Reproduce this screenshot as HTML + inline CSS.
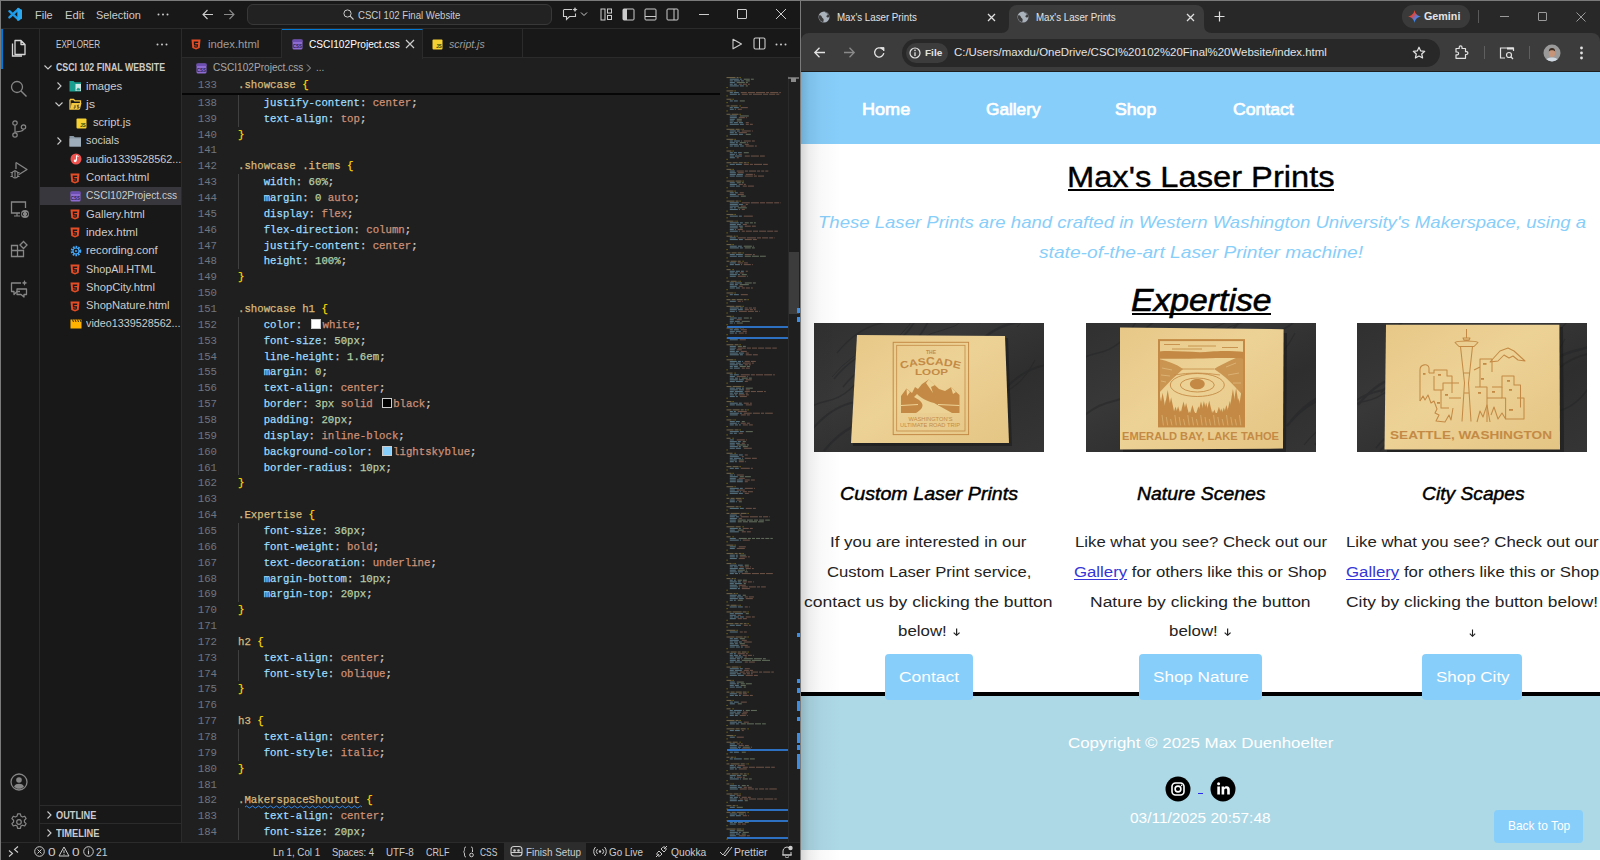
<!DOCTYPE html><html><head><meta charset="utf-8"><style>
*{margin:0;padding:0;box-sizing:border-box}
html,body{width:1600px;height:860px;overflow:hidden;background:#6a6a6a;font-family:"Liberation Sans",sans-serif;position:relative}
.a{position:absolute}
.cl{position:absolute;left:238px;font-family:"Liberation Mono",monospace;font-size:10.7px;line-height:16px;height:16px;white-space:pre;color:#cccccc;-webkit-text-stroke:0.25px currentColor}
.ln{position:absolute;left:182px;width:35px;text-align:right;color:#6e7681;font-family:"Liberation Mono",monospace;font-size:10.7px;line-height:16px;height:16px}
.p{color:#9cdcfe}.v{color:#ce9178}.n{color:#b5cea8}.s{color:#d7ba7d}.b{color:#ffd700}
.sw{display:inline-block;width:10px;height:10px;border:1px solid #ccc;vertical-align:-1px;margin-left:2.5px;margin-right:1.5px}
</style></head><body><div class="a" style="left:1px;top:1px;width:799px;height:859px;background:#1f1f1f"></div><div class="a" style="left:1px;top:1px;width:799px;height:28px;background:#181818;border-bottom:1px solid #2b2b2b"></div><div class="a" style="left:1px;top:29px;width:39px;height:813px;background:#181818;border-right:1px solid #2b2b2b"></div><div class="a" style="left:40px;top:29px;width:142px;height:813px;background:#181818;border-right:1px solid #2b2b2b"></div><div class="a" style="left:182px;top:29px;width:618px;height:29px;background:#181818;border-bottom:1px solid #2b2b2b"></div><div class="a" style="left:1px;top:842px;width:799px;height:18px;background:#181818;border-top:1px solid #2b2b2b"></div><div class="a" style="left:0;top:0;width:1600px;height:1px;background:#7a7a7a"></div><div class="a" style="left:0;top:0;width:1px;height:860px;background:#7a7a7a"></div><div class="a" style="left:800px;top:0;width:1px;height:860px;background:#7a7a7a"></div><div class="ln" style="top:77.0px">133</div><div class="cl" style="top:77.0px"><span class="s">.showcase</span> <span class="b">{</span></div><div class="ln" style="top:94.8px">138</div><div class="cl" style="top:94.8px">    <span class="p">justify-content</span>: <span class="v">center</span>;</div><div class="ln" style="top:110.7px">139</div><div class="cl" style="top:110.7px">    <span class="p">text-align</span>: <span class="v">top</span>;</div><div class="ln" style="top:126.5px">140</div><div class="cl" style="top:126.5px"><span class="b">}</span></div><div class="ln" style="top:142.4px">141</div><div class="cl" style="top:142.4px"></div><div class="ln" style="top:158.2px">142</div><div class="cl" style="top:158.2px"><span class="s">.showcase</span> <span class="s">.items</span> <span class="b">{</span></div><div class="ln" style="top:174.1px">143</div><div class="cl" style="top:174.1px">    <span class="p">width</span>: <span class="n">60%</span>;</div><div class="ln" style="top:189.9px">144</div><div class="cl" style="top:189.9px">    <span class="p">margin</span>: <span class="n">0</span> <span class="v">auto</span>;</div><div class="ln" style="top:205.8px">145</div><div class="cl" style="top:205.8px">    <span class="p">display</span>: <span class="v">flex</span>;</div><div class="ln" style="top:221.6px">146</div><div class="cl" style="top:221.6px">    <span class="p">flex-direction</span>: <span class="v">column</span>;</div><div class="ln" style="top:237.5px">147</div><div class="cl" style="top:237.5px">    <span class="p">justify-content</span>: <span class="v">center</span>;</div><div class="ln" style="top:253.4px">148</div><div class="cl" style="top:253.4px">    <span class="p">height</span>: <span class="n">100%</span>;</div><div class="ln" style="top:269.2px">149</div><div class="cl" style="top:269.2px"><span class="b">}</span></div><div class="ln" style="top:285.1px">150</div><div class="cl" style="top:285.1px"></div><div class="ln" style="top:300.9px">151</div><div class="cl" style="top:300.9px"><span class="s">.showcase</span> <span class="s">h1</span> <span class="b">{</span></div><div class="ln" style="top:316.8px">152</div><div class="cl" style="top:316.8px">    <span class="p">color</span>: <span class="sw" style="background:#fff"></span><span class="v">white</span>;</div><div class="ln" style="top:332.6px">153</div><div class="cl" style="top:332.6px">    <span class="p">font-size</span>: <span class="n">50px</span>;</div><div class="ln" style="top:348.5px">154</div><div class="cl" style="top:348.5px">    <span class="p">line-height</span>: <span class="n">1.6em</span>;</div><div class="ln" style="top:364.3px">155</div><div class="cl" style="top:364.3px">    <span class="p">margin</span>: <span class="n">0</span>;</div><div class="ln" style="top:380.2px">156</div><div class="cl" style="top:380.2px">    <span class="p">text-align</span>: <span class="v">center</span>;</div><div class="ln" style="top:396.0px">157</div><div class="cl" style="top:396.0px">    <span class="p">border</span>: <span class="n">3px</span> <span class="v">solid</span> <span class="sw" style="background:#000"></span><span class="v">black</span>;</div><div class="ln" style="top:411.9px">158</div><div class="cl" style="top:411.9px">    <span class="p">padding</span>: <span class="n">20px</span>;</div><div class="ln" style="top:427.8px">159</div><div class="cl" style="top:427.8px">    <span class="p">display</span>: <span class="v">inline-block</span>;</div><div class="ln" style="top:443.6px">160</div><div class="cl" style="top:443.6px">    <span class="p">background-color</span>: <span class="sw" style="background:#87cefa"></span><span class="v">lightskyblue</span>;</div><div class="ln" style="top:459.5px">161</div><div class="cl" style="top:459.5px">    <span class="p">border-radius</span>: <span class="n">10px</span>;</div><div class="ln" style="top:475.3px">162</div><div class="cl" style="top:475.3px"><span class="b">}</span></div><div class="ln" style="top:491.2px">163</div><div class="cl" style="top:491.2px"></div><div class="ln" style="top:507.0px">164</div><div class="cl" style="top:507.0px"><span class="s">.Expertise</span> <span class="b">{</span></div><div class="ln" style="top:522.9px">165</div><div class="cl" style="top:522.9px">    <span class="p">font-size</span>: <span class="n">36px</span>;</div><div class="ln" style="top:538.7px">166</div><div class="cl" style="top:538.7px">    <span class="p">font-weight</span>: <span class="v">bold</span>;</div><div class="ln" style="top:554.6px">167</div><div class="cl" style="top:554.6px">    <span class="p">text-decoration</span>: <span class="v">underline</span>;</div><div class="ln" style="top:570.5px">168</div><div class="cl" style="top:570.5px">    <span class="p">margin-bottom</span>: <span class="n">10px</span>;</div><div class="ln" style="top:586.3px">169</div><div class="cl" style="top:586.3px">    <span class="p">margin-top</span>: <span class="n">20px</span>;</div><div class="ln" style="top:602.2px">170</div><div class="cl" style="top:602.2px"><span class="b">}</span></div><div class="ln" style="top:618.0px">171</div><div class="cl" style="top:618.0px"></div><div class="ln" style="top:633.9px">172</div><div class="cl" style="top:633.9px"><span class="s">h2</span> <span class="b">{</span></div><div class="ln" style="top:649.7px">173</div><div class="cl" style="top:649.7px">    <span class="p">text-align</span>: <span class="v">center</span>;</div><div class="ln" style="top:665.6px">174</div><div class="cl" style="top:665.6px">    <span class="p">font-style</span>: <span class="v">oblique</span>;</div><div class="ln" style="top:681.4px">175</div><div class="cl" style="top:681.4px"><span class="b">}</span></div><div class="ln" style="top:697.3px">176</div><div class="cl" style="top:697.3px"></div><div class="ln" style="top:713.1px">177</div><div class="cl" style="top:713.1px"><span class="s">h3</span> <span class="b">{</span></div><div class="ln" style="top:729.0px">178</div><div class="cl" style="top:729.0px">    <span class="p">text-align</span>: <span class="v">center</span>;</div><div class="ln" style="top:744.9px">179</div><div class="cl" style="top:744.9px">    <span class="p">font-style</span>: <span class="v">italic</span>;</div><div class="ln" style="top:760.7px">180</div><div class="cl" style="top:760.7px"><span class="b">}</span></div><div class="ln" style="top:776.6px">181</div><div class="cl" style="top:776.6px"></div><div class="ln" style="top:792.4px">182</div><div class="cl" style="top:792.4px"><span class="s">.MakerspaceShoutout</span> <span class="b">{</span></div><div class="ln" style="top:808.3px">183</div><div class="cl" style="top:808.3px">    <span class="p">text-align</span>: <span class="v">center</span>;</div><div class="ln" style="top:824.1px">184</div><div class="cl" style="top:824.1px">    <span class="p">font-size</span>: <span class="n">20px</span>;</div><svg class="a" style="left:244.5px;top:804.5px" width="117" height="4" viewBox="0 0 117 4"><path d="M0 2 q1.5 -2 3 0 q1.5 2 3 0 q1.5 -2 3 0 q1.5 2 3 0 q1.5 -2 3 0 q1.5 2 3 0 q1.5 -2 3 0 q1.5 2 3 0 q1.5 -2 3 0 q1.5 2 3 0 q1.5 -2 3 0 q1.5 2 3 0 q1.5 -2 3 0 q1.5 2 3 0 q1.5 -2 3 0 q1.5 2 3 0 q1.5 -2 3 0 q1.5 2 3 0 q1.5 -2 3 0 q1.5 2 3 0 q1.5 -2 3 0 q1.5 2 3 0 q1.5 -2 3 0 q1.5 2 3 0 q1.5 -2 3 0 q1.5 2 3 0 q1.5 -2 3 0 q1.5 2 3 0 q1.5 -2 3 0 q1.5 2 3 0 q1.5 -2 3 0 q1.5 2 3 0 q1.5 -2 3 0 q1.5 2 3 0 q1.5 -2 3 0 q1.5 2 3 0 q1.5 -2 3 0 q1.5 2 3 0 q1.5 -2 3 0 q1.5 2 3 0" stroke="#3794ff" stroke-width="0.9" fill="none"/></svg><div class="a" style="left:182px;top:93px;width:538px;height:2px;background:#000;opacity:.8"></div><svg class="a" style="left:0;top:0" width="30" height="28" viewBox="0 0 30 28"><path d="M9.4 11.2L18.6 19.6M9.4 17.4L18.6 9" stroke="#1e9be8" stroke-width="2.4" stroke-linecap="round"/><path d="M17.3 7.8L22 9.8V18.8L17.3 21Z" fill="#2aa8f0"/></svg><div class="a fx" id="f8d3d4570" style="left:35.19px;top:8.65px;white-space:nowrap;transform-origin:0 0;transform:scaleX(1.0169);font-size:10.8px;line-height:12.42px;color:#cccccc">File</div><div class="a fx" id="f96f7f891" style="left:65.07px;top:8.65px;white-space:nowrap;transform-origin:0 0;transform:scaleX(1.0371);font-size:10.8px;line-height:12.42px;color:#cccccc">Edit</div><div class="a fx" id="f7fc2f27d" style="left:95.99px;top:8.65px;white-space:nowrap;transform-origin:0 0;transform:scaleX(1.0108);font-size:10.8px;line-height:12.42px;color:#cccccc">Selection</div><svg class="a" style="left:157px;top:13px" width="12" height="3" viewBox="0 0 12 3"><circle cx="1.5" cy="1.5" r="1" fill="#cccccc"/><circle cx="6" cy="1.5" r="1" fill="#cccccc"/><circle cx="10.5" cy="1.5" r="1" fill="#cccccc"/></svg><svg class="a" style="left:201px;top:8px" width="13" height="13" viewBox="0 0 13 13"><path d="M12 6.5H2M6.5 2L2 6.5L6.5 11" stroke="#cccccc" stroke-width="1.1" fill="none"/></svg><svg class="a" style="left:223px;top:8px" width="13" height="13" viewBox="0 0 13 13"><path d="M1 6.5H11M6.5 2L11 6.5L6.5 11" stroke="#8a8a8a" stroke-width="1.1" fill="none"/></svg><div class="a" style="left:247px;top:4px;width:305px;height:21px;background:#222222;border:1px solid #383838;border-radius:6px"></div><svg class="a" style="left:343px;top:9px" width="11" height="11" viewBox="0 0 11 11"><circle cx="4.5" cy="4.5" r="3.6" stroke="#cccccc" stroke-width="1" fill="none"/><path d="M7.2 7.2L10.5 10.5" stroke="#cccccc" stroke-width="1.1"/></svg><div class="a fx" id="fbb0cd3ff" style="left:358.04px;top:8.65px;white-space:nowrap;transform-origin:0 0;transform:scaleX(0.8898);font-size:10.8px;line-height:12.42px;color:#cccccc">CSCI 102 Final Website</div><svg class="a" style="left:561px;top:6px" width="28" height="16" viewBox="0 0 28 16">
<path d="M3 3.5h8M2.5 3.5v7h3v3l3-3h6v-3" stroke="#cccccc" stroke-width="1.1" fill="none"/><path d="M14 1l.8 1.8 1.8.8-1.8.8-.8 1.8-.8-1.8-1.8-.8 1.8-.8z" fill="#cccccc"/>
<path d="M20 6.5l3 3 3-3" stroke="#cccccc" stroke-width="1" fill="none"/></svg><svg class="a" style="left:600px;top:8px" width="13" height="13" viewBox="0 0 13 13"><rect x="1" y="1" width="4" height="11" stroke="#cccccc" fill="none"/><rect x="7.5" y="1" width="4" height="4" stroke="#cccccc" fill="none"/><rect x="7.5" y="7.5" width="4" height="4" stroke="#cccccc" fill="none"/></svg><svg class="a" style="left:622px;top:8px" width="13" height="13" viewBox="0 0 13 13"><rect x="1" y="1" width="11" height="11" rx="1" stroke="#cccccc" fill="none"/><rect x="1" y="1" width="4" height="11" fill="#cccccc"/></svg><svg class="a" style="left:644px;top:8px" width="13" height="13" viewBox="0 0 13 13"><rect x="1" y="1" width="11" height="11" rx="1" stroke="#cccccc" fill="none"/><path d="M1 8.5h11" stroke="#cccccc"/></svg><svg class="a" style="left:666px;top:8px" width="13" height="13" viewBox="0 0 13 13"><rect x="1" y="1" width="11" height="11" rx="1" stroke="#cccccc" fill="none"/><path d="M8 1v11" stroke="#cccccc"/></svg><div class="a" style="left:699px;top:14px;width:10px;height:1px;background:#cccccc"></div><div class="a" style="left:737px;top:9px;width:10px;height:10px;border:1px solid #cccccc;border-radius:1px"></div><svg class="a" style="left:775px;top:8px" width="12" height="12" viewBox="0 0 12 12"><path d="M1 1L11 11M11 1L1 11" stroke="#cccccc" stroke-width="1"/></svg><div class="a" style="left:1px;top:29px;width:2px;height:40px;background:#0078d4"></div><svg class="a" style="left:9px;top:38px" width="20" height="20" viewBox="0 0 20 20"><path d="M6 2.5h6l4 4v10h-10z M12 2.5v4h4" stroke="#d7d7d7" stroke-width="1.3" fill="none" stroke-linejoin="round"/><path d="M3.5 5.5v12.5h9.5" stroke="#d7d7d7" stroke-width="1.3" fill="none"/></svg><svg class="a" style="left:9px;top:79px" width="20" height="20" viewBox="0 0 20 20"><circle cx="8" cy="8" r="5.5" stroke="#868686" stroke-width="1.3" fill="none"/><path d="M12 12L17.5 17.5" stroke="#868686" stroke-width="1.4"/></svg><svg class="a" style="left:9px;top:119px" width="20" height="20" viewBox="0 0 20 20"><circle cx="6" cy="4" r="2.2" stroke="#868686" stroke-width="1.2" fill="none"/><circle cx="6" cy="16" r="2.2" stroke="#868686" stroke-width="1.2" fill="none"/><circle cx="14.5" cy="8" r="2.2" stroke="#868686" stroke-width="1.2" fill="none"/><path d="M6 6.2v7.6M14.5 10.2c0 3-8.5 2-8.5 3.6" stroke="#868686" stroke-width="1.2" fill="none"/></svg><svg class="a" style="left:9px;top:160px" width="20" height="20" viewBox="0 0 20 20"><path d="M7 2.5L18 9.5L10 14.5" stroke="#868686" stroke-width="1.3" fill="none" stroke-linejoin="round"/><path d="M7 2.5V9" stroke="#868686" stroke-width="1.3"/><ellipse cx="6" cy="14.5" rx="3" ry="3.5" stroke="#868686" stroke-width="1.2" fill="none"/><path d="M1.5 12.5h2M8.5 12.5h2M1.5 16.5h2M8.5 16.5h2M6 10v8" stroke="#868686" stroke-width="1.1"/></svg><svg class="a" style="left:9px;top:199px" width="21" height="20" viewBox="0 0 21 20"><path d="M11 14H2.5V3h14v6" stroke="#868686" stroke-width="1.3" fill="none"/><path d="M5 17h6M8 14v3" stroke="#868686" stroke-width="1.2"/><circle cx="16" cy="15" r="4" fill="#868686"/><path d="M14.5 13l-1.5 2 1.5 2M17.5 13l1.5 2-1.5 2" stroke="#181818" stroke-width="1" fill="none"/></svg><svg class="a" style="left:9px;top:239px" width="20" height="20" viewBox="0 0 20 20"><path d="M2.5 6.5h6v11h-6zM8.5 11.5h6v6h-6zM2.5 11.5h6" stroke="#868686" stroke-width="1.3" fill="none"/><path d="M11 6l3.5-3.5L18 6l-3.5 3.5z" stroke="#868686" stroke-width="1.3" fill="none"/></svg><svg class="a" style="left:9px;top:279px" width="20" height="20" viewBox="0 0 20 20"><path d="M12 4H2.5v8.5h2.5v3l3-3h3" stroke="#868686" stroke-width="1.3" fill="none" stroke-linejoin="round"/><path d="M8 10h9.5v5.5H15v2.5l-3-2.5H8z" stroke="#868686" stroke-width="1.3" fill="none" stroke-linejoin="round"/><path d="M15.5 1l.9 2 2 .9-2 .9-.9 2-.9-2-2-.9 2-.9z" fill="#868686"/></svg><svg class="a" style="left:9px;top:772px" width="20" height="20" viewBox="0 0 20 20"><circle cx="10" cy="10" r="8" stroke="#868686" stroke-width="1.3" fill="none"/><circle cx="10" cy="8" r="2.8" fill="#868686"/><path d="M5 14.5c1-2 3-2.7 5-2.7s4 .7 5 2.7c-1.3 1.6-3 2.3-5 2.3s-3.7-.7-5-2.3z" fill="#868686"/></svg><svg class="a" style="left:9px;top:812px" width="20" height="20" viewBox="0 0 20 20"><path d="M8.6 1.8h2.8l.5 2.3 1.6.9 2.2-.8 1.4 2.4-1.7 1.6v1.8l1.7 1.6-1.4 2.4-2.2-.8-1.6.9-.5 2.3H8.6l-.5-2.3-1.6-.9-2.2.8-1.4-2.4 1.7-1.6V8.2L2.9 6.6l1.4-2.4 2.2.8 1.6-.9z" stroke="#868686" stroke-width="1.2" fill="none" stroke-linejoin="round"/><circle cx="10" cy="10" r="2.3" stroke="#868686" stroke-width="1.2" fill="none"/></svg><div class="a fx" id="ffa939419" style="left:55.85px;top:38.78px;white-space:nowrap;transform-origin:0 0;transform:scaleX(0.8096);font-size:10px;line-height:11.50px;color:#cccccc">EXPLORER</div><svg class="a" style="left:156px;top:43px" width="12" height="3" viewBox="0 0 12 3"><circle cx="1.5" cy="1.5" r="1" fill="#cccccc"/><circle cx="6" cy="1.5" r="1" fill="#cccccc"/><circle cx="10.5" cy="1.5" r="1" fill="#cccccc"/></svg><svg class="a" style="left:43px;top:62px" width="10" height="10" viewBox="0 0 10 10"><path d="M1.5 3.5L5 7L8.5 3.5" stroke="#cccccc" stroke-width="1.1" fill="none"/></svg><div class="a fx" id="f34230560" style="left:55.79px;top:62.28px;white-space:nowrap;transform-origin:0 0;transform:scaleX(0.8817);font-size:10px;line-height:11.50px;font-weight:bold;color:#cccccc">CSCI 102 FINAL WEBSITE</div><div class="a" style="left:40px;top:187px;width:141px;height:18px;background:#37373d"></div><svg class="a" style="left:54px;top:81px" width="10" height="10" viewBox="0 0 10 10"><path d="M3.5 1.5L7 5L3.5 8.5" stroke="#cccccc" stroke-width="1.1" fill="none"/></svg><svg class="a" style="left:69px;top:80px" width="13" height="12" viewBox="0 0 13 12"><path d="M0.5 1h4l1.3 1.3H12v9.2H0.5z" fill="#1a9e8f"/><rect x="6.5" y="4" width="5.5" height="7" fill="#cfe9e6"/><path d="M7.5 9.5l1.5-2 1.2 1.2 1-.8V10.5h-3.7z" fill="#1a9e8f"/></svg><div class="a fx" id="f1b36d92f" style="left:85.64px;top:79.53px;white-space:nowrap;transform-origin:0 0;transform:scaleX(0.9518);font-size:11.8px;line-height:13.57px;color:#cccccc">images</div><svg class="a" style="left:54px;top:99px" width="10" height="10" viewBox="0 0 10 10"><path d="M1.5 3.5L5 7L8.5 3.5" stroke="#cccccc" stroke-width="1.1" fill="none"/></svg><svg class="a" style="left:69px;top:98px" width="13" height="12" viewBox="0 0 13 12"><path d="M1 1.5h3.5l1.3 1.3H11.5V5" stroke="#f5c842" stroke-width="1.3" fill="none"/><path d="M1 1.5V11H10.5" stroke="#f5c842" stroke-width="1.3" fill="none"/><path d="M2.5 5H12.5L11 11H1.5z" fill="#f5c842"/><path d="M6 7.2v2.3c0 .8-.9.8-1.3.5M10 7.5c-.5-.5-1.8-.4-1.8.4 0 .9 1.8.6 1.8 1.5 0 .8-1.3.9-1.9.4" stroke="#181818" stroke-width=".8" fill="none"/></svg><div class="a fx" id="f57c8d89e" style="left:85.54px;top:97.83px;white-space:nowrap;transform-origin:0 0;transform:scaleX(1.0784);font-size:11.8px;line-height:13.57px;color:#cccccc">js</div><svg class="a" style="left:76px;top:118px" width="11" height="11" viewBox="0 0 11 11"><rect x="0.5" y="0.5" width="10" height="10" rx="1" fill="#f5d132"/><text x="7" y="9.3" font-size="4.5" font-family="Liberation Sans" fill="#3a3000" text-anchor="middle" font-weight="bold">JS</text></svg><div class="a fx" id="fb6e712b3" style="left:92.65px;top:116.13px;white-space:nowrap;transform-origin:0 0;transform:scaleX(0.9429);font-size:11.8px;line-height:13.57px;color:#cccccc">script.js</div><svg class="a" style="left:54px;top:136px" width="10" height="10" viewBox="0 0 10 10"><path d="M3.5 1.5L7 5L3.5 8.5" stroke="#cccccc" stroke-width="1.1" fill="none"/></svg><svg class="a" style="left:69px;top:135px" width="13" height="12" viewBox="0 0 13 12"><path d="M0.5 1h4l1.3 1.3H12v9.2H0.5z" fill="#8a98a6"/><path d="M0.5 3.5h11.5v8H0.5z" fill="#9fadbb"/></svg><div class="a fx" id="f07948470" style="left:85.66px;top:134.43px;white-space:nowrap;transform-origin:0 0;transform:scaleX(0.9206);font-size:11.8px;line-height:13.57px;color:#cccccc">socials</div><svg class="a" style="left:70px;top:153px" width="12" height="12" viewBox="0 0 12 12"><circle cx="6" cy="6" r="5.5" fill="#ef5350"/><path d="M6.5 2.5v5" stroke="#fff" stroke-width="1.1"/><circle cx="5.2" cy="7.8" r="1.4" fill="#fff"/><path d="M6.5 2.5l2 1" stroke="#fff" stroke-width="1"/></svg><div class="a fx" id="f7b0eb45c" style="left:85.67px;top:152.73px;white-space:nowrap;transform-origin:0 0;transform:scaleX(0.9126);font-size:11.8px;line-height:13.57px;color:#cccccc">audio1339528562...</div><svg class="a" style="left:70px;top:173px" width="10" height="11" viewBox="0 0 10 11"><path d="M0.5 0.5h9l-0.8 8.5L5 10.5 1.3 9z" fill="#e44d26"/><path d="M2.7 2.5h4.6l-.15 1.5H4.2l.1 1.3h2.75l-.3 3L5 8.8l-1.7-.5-.1-1.3h1.2l.05.6.55.15.6-.15.1-1.2H3z" fill="#181818"/></svg><div class="a fx" id="fe304c48c" style="left:85.64px;top:171.03px;white-space:nowrap;transform-origin:0 0;transform:scaleX(0.9542);font-size:11.8px;line-height:13.57px;color:#cccccc">Contact.html</div><svg class="a" style="left:70px;top:191px" width="11" height="11" viewBox="0 0 11 11"><rect x="0.5" y="0.5" width="10" height="10" rx="1.5" fill="#8d6bd1"/><rect x="0.5" y="0.5" width="10" height="2.5" fill="#6c4fb0"/><text x="5.5" y="8.8" font-size="4.5" font-family="Liberation Sans" fill="#2d1f52" text-anchor="middle" font-weight="bold">CSS</text></svg><div class="a fx" id="fc0e2760e" style="left:85.71px;top:189.33px;white-space:nowrap;transform-origin:0 0;transform:scaleX(0.8639);font-size:11.8px;line-height:13.57px;color:#cccccc">CSCI102Project.css</div><svg class="a" style="left:70px;top:209px" width="10" height="11" viewBox="0 0 10 11"><path d="M0.5 0.5h9l-0.8 8.5L5 10.5 1.3 9z" fill="#e44d26"/><path d="M2.7 2.5h4.6l-.15 1.5H4.2l.1 1.3h2.75l-.3 3L5 8.8l-1.7-.5-.1-1.3h1.2l.05.6.55.15.6-.15.1-1.2H3z" fill="#181818"/></svg><div class="a fx" id="f9db9fd0f" style="left:85.64px;top:207.63px;white-space:nowrap;transform-origin:0 0;transform:scaleX(0.9474);font-size:11.8px;line-height:13.57px;color:#cccccc">Gallery.html</div><svg class="a" style="left:70px;top:227px" width="10" height="11" viewBox="0 0 10 11"><path d="M0.5 0.5h9l-0.8 8.5L5 10.5 1.3 9z" fill="#e44d26"/><path d="M2.7 2.5h4.6l-.15 1.5H4.2l.1 1.3h2.75l-.3 3L5 8.8l-1.7-.5-.1-1.3h1.2l.05.6.55.15.6-.15.1-1.2H3z" fill="#181818"/></svg><div class="a fx" id="fc4af1360" style="left:85.63px;top:225.93px;white-space:nowrap;transform-origin:0 0;transform:scaleX(0.9632);font-size:11.8px;line-height:13.57px;color:#cccccc">index.html</div><svg class="a" style="left:70px;top:245px" width="12" height="12" viewBox="0 0 12 12"><circle cx="6" cy="6" r="4.2" stroke="#42a5f5" stroke-width="2.2" stroke-dasharray="1.6 1.1" fill="none"/><circle cx="6" cy="6" r="3" stroke="#42a5f5" stroke-width="1.1" fill="none"/><circle cx="6" cy="6" r="1" fill="#42a5f5"/></svg><div class="a fx" id="f62ac2ffd" style="left:85.63px;top:244.23px;white-space:nowrap;transform-origin:0 0;transform:scaleX(0.9577);font-size:11.8px;line-height:13.57px;color:#cccccc">recording.conf</div><svg class="a" style="left:70px;top:264px" width="10" height="11" viewBox="0 0 10 11"><path d="M0.5 0.5h9l-0.8 8.5L5 10.5 1.3 9z" fill="#e44d26"/><path d="M2.7 2.5h4.6l-.15 1.5H4.2l.1 1.3h2.75l-.3 3L5 8.8l-1.7-.5-.1-1.3h1.2l.05.6.55.15.6-.15.1-1.2H3z" fill="#181818"/></svg><div class="a fx" id="fa7ce2646" style="left:85.67px;top:262.53px;white-space:nowrap;transform-origin:0 0;transform:scaleX(0.9164);font-size:11.8px;line-height:13.57px;color:#cccccc">ShopAll.HTML</div><svg class="a" style="left:70px;top:282px" width="10" height="11" viewBox="0 0 10 11"><path d="M0.5 0.5h9l-0.8 8.5L5 10.5 1.3 9z" fill="#e44d26"/><path d="M2.7 2.5h4.6l-.15 1.5H4.2l.1 1.3h2.75l-.3 3L5 8.8l-1.7-.5-.1-1.3h1.2l.05.6.55.15.6-.15.1-1.2H3z" fill="#181818"/></svg><div class="a fx" id="fd6530ebb" style="left:85.64px;top:280.83px;white-space:nowrap;transform-origin:0 0;transform:scaleX(0.9495);font-size:11.8px;line-height:13.57px;color:#cccccc">ShopCity.html</div><svg class="a" style="left:70px;top:301px" width="10" height="11" viewBox="0 0 10 11"><path d="M0.5 0.5h9l-0.8 8.5L5 10.5 1.3 9z" fill="#e44d26"/><path d="M2.7 2.5h4.6l-.15 1.5H4.2l.1 1.3h2.75l-.3 3L5 8.8l-1.7-.5-.1-1.3h1.2l.05.6.55.15.6-.15.1-1.2H3z" fill="#181818"/></svg><div class="a fx" id="f7647395e" style="left:85.64px;top:299.13px;white-space:nowrap;transform-origin:0 0;transform:scaleX(0.9443);font-size:11.8px;line-height:13.57px;color:#cccccc">ShopNature.html</div><svg class="a" style="left:70px;top:319px" width="12" height="10" viewBox="0 0 12 10"><rect x="0.5" y="3" width="11" height="6.5" fill="#ffb300"/><path d="M0.5 0.5h11v2.5h-11z" fill="#ffb300"/><path d="M2.5 0.5l1 2.5M5 0.5l1 2.5M7.5 0.5l1 2.5M10 0.5l1 2.5" stroke="#181818" stroke-width="0.9"/></svg><div class="a fx" id="fc50c4e35" style="left:85.67px;top:317.43px;white-space:nowrap;transform-origin:0 0;transform:scaleX(0.9126);font-size:11.8px;line-height:13.57px;color:#cccccc">video1339528562...</div><div class="a" style="left:40px;top:805px;width:141px;height:1px;background:#2b2b2b"></div><div class="a" style="left:40px;top:823px;width:141px;height:1px;background:#2b2b2b"></div><svg class="a" style="left:44px;top:810px" width="10" height="10" viewBox="0 0 10 10"><path d="M3.5 1.5L7 5L3.5 8.5" stroke="#cccccc" stroke-width="1.1" fill="none"/></svg><svg class="a" style="left:44px;top:828px" width="10" height="10" viewBox="0 0 10 10"><path d="M3.5 1.5L7 5L3.5 8.5" stroke="#cccccc" stroke-width="1.1" fill="none"/></svg><div class="a fx" id="fd5aaadbe" style="left:55.76px;top:810.18px;white-space:nowrap;transform-origin:0 0;transform:scaleX(0.9193);font-size:10px;line-height:11.50px;font-weight:bold;color:#cccccc">OUTLINE</div><div class="a fx" id="f925b05a7" style="left:55.75px;top:828.38px;white-space:nowrap;transform-origin:0 0;transform:scaleX(0.9320);font-size:10px;line-height:11.50px;font-weight:bold;color:#cccccc">TIMELINE</div><div class="a" style="left:182px;top:29px;width:100px;height:29px;border-right:1px solid #2b2b2b"></div><div class="a" style="left:282px;top:29px;width:141px;height:30px;background:#1f1f1f;border-top:1px solid #0078d4;border-right:1px solid #2b2b2b"></div><div class="a" style="left:422px;top:29px;width:101px;height:29px;border-right:1px solid #2b2b2b"></div><svg class="a" style="left:191px;top:39px" width="10" height="11" viewBox="0 0 10 11"><path d="M0.5 0.5h9l-0.8 8.5L5 10.5 1.3 9z" fill="#e44d26"/><path d="M2.7 2.5h4.6l-.15 1.5H4.2l.1 1.3h2.75l-.3 3L5 8.8l-1.7-.5-.1-1.3h1.2l.05.6.55.15.6-.15.1-1.2H3z" fill="#181818"/></svg><div class="a fx" id="f9b634681" style="left:207.60px;top:38.43px;white-space:nowrap;transform-origin:0 0;transform:scaleX(1.0059);font-size:11.2px;line-height:12.88px;color:#9d9d9d">index.html</div><svg class="a" style="left:292px;top:39px" width="11" height="11" viewBox="0 0 11 11"><rect x="0.5" y="0.5" width="10" height="10" rx="1.5" fill="#8d6bd1"/><rect x="0.5" y="0.5" width="10" height="2.5" fill="#6c4fb0"/><text x="5.5" y="8.8" font-size="4.5" font-family="Liberation Sans" fill="#2d1f52" text-anchor="middle" font-weight="bold">CSS</text></svg><div class="a fx" id="f3b2363e3" style="left:308.58px;top:38.43px;white-space:nowrap;transform-origin:0 0;transform:scaleX(0.9060);font-size:11.2px;line-height:12.88px;color:#ffffff">CSCI102Project.css</div><svg class="a" style="left:405px;top:39px" width="10" height="10" viewBox="0 0 10 10"><path d="M1 1L9 9M9 1L1 9" stroke="#cccccc" stroke-width="1.2"/></svg><svg class="a" style="left:432px;top:39px" width="11" height="11" viewBox="0 0 11 11"><rect x="0.5" y="0.5" width="10" height="10" rx="1" fill="#f5d132"/><text x="7" y="9.3" font-size="4.5" font-family="Liberation Sans" fill="#3a3000" text-anchor="middle" font-weight="bold">JS</text></svg><div class="a fx" id="f0c9adb2a" style="left:448.65px;top:38.43px;white-space:nowrap;transform-origin:0 0;transform:scaleX(0.9414);font-size:11.2px;line-height:12.88px;color:#9d9d9d;font-style:italic">script.js</div><svg class="a" style="left:731px;top:38px" width="12" height="12" viewBox="0 0 12 12"><path d="M2 1.2L10.5 6L2 10.8z" stroke="#cccccc" stroke-width="1.1" fill="none" stroke-linejoin="round"/></svg><svg class="a" style="left:753px;top:37px" width="13" height="13" viewBox="0 0 13 13"><rect x="1" y="1" width="11" height="11" rx="1.5" stroke="#cccccc" stroke-width="1.1" fill="none"/><path d="M6.5 1v11" stroke="#cccccc" stroke-width="1.1"/></svg><svg class="a" style="left:775px;top:43px" width="12" height="3" viewBox="0 0 12 3"><circle cx="1.5" cy="1.5" r="1" fill="#cccccc"/><circle cx="6" cy="1.5" r="1" fill="#cccccc"/><circle cx="10.5" cy="1.5" r="1" fill="#cccccc"/></svg><svg class="a" style="left:196px;top:63px" width="11" height="11" viewBox="0 0 11 11"><rect x="0.5" y="0.5" width="10" height="10" rx="1.5" fill="#8d6bd1"/><rect x="0.5" y="0.5" width="10" height="2.5" fill="#6c4fb0"/><text x="5.5" y="8.8" font-size="4.5" font-family="Liberation Sans" fill="#2d1f52" text-anchor="middle" font-weight="bold">CSS</text></svg><div class="a fx" id="fc90b84e4" style="left:212.72px;top:62.02px;white-space:nowrap;transform-origin:0 0;transform:scaleX(0.9711);font-size:10.4px;line-height:11.96px;color:#a9a9a9">CSCI102Project.css</div><svg class="a" style="left:305px;top:63px" width="8" height="10" viewBox="0 0 8 10"><path d="M2 1.5L5.5 5L2 8.5" stroke="#a9a9a9" stroke-width="1" fill="none"/></svg><div class="a fx" id="fbdb0f934" style="left:316.45px;top:62.02px;white-space:nowrap;transform-origin:0 0;transform:scaleX(0.9398);font-size:10.4px;line-height:11.96px;color:#a9a9a9">...</div><div class="a" style="left:504px;top:843px;width:82px;height:17px;background:#2c2c2c"></div><svg class="a" style="left:8px;top:846px" width="11" height="11" viewBox="0 0 10 11"><path d="M0.5 4.5L4 7.5 0.5 10.5M9.5 0.5L6 3.5 9.5 6.5" stroke="#cccccc" stroke-width="1.1" fill="none"/></svg><svg class="a" style="left:34px;top:846px" width="11" height="11" viewBox="0 0 11 11"><circle cx="5.5" cy="5.5" r="4.8" stroke="#cccccc" stroke-width="1" fill="none"/><path d="M3.5 3.5L7.5 7.5M7.5 3.5L3.5 7.5" stroke="#cccccc" stroke-width="1"/></svg><div class="a fx" id="f7d0e3ac0" style="left:47.97px;top:846.03px;white-space:nowrap;transform-origin:0 0;transform:scaleX(1.2868);font-size:10.6px;line-height:12.19px;color:#cccccc">0</div><svg class="a" style="left:58px;top:846px" width="12" height="11" viewBox="0 0 12 11"><path d="M6 1L11 10H1Z" stroke="#cccccc" stroke-width="1" fill="none" stroke-linejoin="round"/><path d="M6 4.2V7.2M6 8.2V9" stroke="#cccccc" stroke-width="1"/></svg><div class="a fx" id="f84a823f0" style="left:71.97px;top:846.03px;white-space:nowrap;transform-origin:0 0;transform:scaleX(1.2868);font-size:10.6px;line-height:12.19px;color:#cccccc;">0</div><svg class="a" style="left:83px;top:846px" width="11" height="11" viewBox="0 0 11 11"><circle cx="5.5" cy="5.5" r="4.8" stroke="#cccccc" stroke-width="1" fill="none"/><path d="M5.5 4.5V8.3M5.5 2.7V3.5" stroke="#cccccc" stroke-width="1.1"/></svg><div class="a fx" id="fe65d36cf" style="left:96.21px;top:846.03px;white-space:nowrap;transform-origin:0 0;transform:scaleX(0.9833);font-size:10.6px;line-height:12.19px;color:#cccccc">21</div><div class="a fx" id="f366f0e11" style="left:273.06px;top:846.03px;white-space:nowrap;transform-origin:0 0;transform:scaleX(0.9190);font-size:10.6px;line-height:12.19px;color:#cccccc">Ln 1, Col 1</div><div class="a fx" id="f6c19eee2" style="left:332.49px;top:846.03px;white-space:nowrap;transform-origin:0 0;transform:scaleX(0.8891);font-size:10.6px;line-height:12.19px;color:#cccccc">Spaces: 4</div><div class="a fx" id="f570b461f" style="left:386.46px;top:846.03px;white-space:nowrap;transform-origin:0 0;transform:scaleX(0.9195);font-size:10.6px;line-height:12.19px;color:#cccccc">UTF-8</div><div class="a fx" id="fc0fd0743" style="left:426.02px;top:846.03px;white-space:nowrap;transform-origin:0 0;transform:scaleX(0.8492);font-size:10.6px;line-height:12.19px;color:#cccccc">CRLF</div><div class="a fx" id="f368ca46c" style="left:479.66px;top:846.03px;white-space:nowrap;transform-origin:0 0;transform:scaleX(0.7983);font-size:10.6px;line-height:12.19px;color:#cccccc">CSS</div><div class="a fx" id="fa2bed67b" style="left:526.05px;top:846.03px;white-space:nowrap;transform-origin:0 0;transform:scaleX(0.9348);font-size:10.6px;line-height:12.19px;color:#cccccc">Finish Setup</div><div class="a fx" id="f763865ac" style="left:608.56px;top:846.03px;white-space:nowrap;transform-origin:0 0;transform:scaleX(0.9284);font-size:10.6px;line-height:12.19px;color:#cccccc">Go Live</div><div class="a fx" id="f082d68d3" style="left:670.83px;top:846.03px;white-space:nowrap;transform-origin:0 0;transform:scaleX(0.9667);font-size:10.6px;line-height:12.19px;color:#cccccc">Quokka</div><div class="a fx" id="f898850de" style="left:734.22px;top:846.03px;white-space:nowrap;transform-origin:0 0;transform:scaleX(0.9779);font-size:10.6px;line-height:12.19px;color:#cccccc">Prettier</div><svg class="a" style="left:463px;top:846px" width="12" height="12" viewBox="0 0 12 12"><path d="M3 1C1.5 1 1.5 2 1.5 3.5S.5 6 .5 6s1 .5 1 2S1.5 11 3 11" stroke="#cccccc" stroke-width="1" fill="none"/><circle cx="8.5" cy="9" r="1.8" stroke="#cccccc" stroke-width="1" fill="none"/><path d="M8 1c1.5 0 1.5 1 1.5 2.5V6" stroke="#cccccc" stroke-width="1" fill="none"/></svg><svg class="a" style="left:510px;top:845px" width="13" height="12" viewBox="0 0 13 12"><rect x="1" y="1.5" width="11" height="9.5" rx="3" stroke="#cccccc" stroke-width="1.1" fill="none"/><circle cx="4.5" cy="5.5" r="1.3" fill="#cccccc"/><circle cx="8.5" cy="5.5" r="1.3" fill="#cccccc"/><path d="M1 7.5h11" stroke="#cccccc"/></svg><svg class="a" style="left:593px;top:846px" width="14" height="11" viewBox="0 0 14 11"><circle cx="7" cy="5.5" r="1.2" fill="#cccccc"/><path d="M4.5 3a3.5 3.5 0 0 0 0 5M9.5 3a3.5 3.5 0 0 1 0 5M2.5 1a6.5 6.5 0 0 0 0 9M11.5 1a6.5 6.5 0 0 1 0 9" stroke="#cccccc" stroke-width="1" fill="none"/></svg><svg class="a" style="left:655px;top:845px" width="13" height="13" viewBox="0 0 13 13"><path d="M1 12L4 9M9 4L12 1M4 6l3 3-1.5 1.5a2.1 2.1 0 0 1-3-3zM6 4l3 3 1.5-1.5a2.1 2.1 0 0 0-3-3z" stroke="#cccccc" stroke-width="1" fill="none"/></svg><svg class="a" style="left:719px;top:846px" width="14" height="11" viewBox="0 0 14 11"><path d="M1 6l3 3 6-8M5 9l1 1 7-9" stroke="#cccccc" stroke-width="1" fill="none"/></svg><svg class="a" style="left:781px;top:845px" width="12" height="13" viewBox="0 0 12 13"><path d="M2 10V6a4 4 0 0 1 6-3.4M2 10h8V7M1 10h10M4.5 11.5a1.5 1.5 0 0 0 3 0" stroke="#cccccc" stroke-width="1" fill="none"/><circle cx="9.5" cy="3" r="2.2" fill="#cccccc"/></svg><div class="a" style="left:238px;top:95.0px;width:1px;height:31.5px;background:#404040"></div><div class="a" style="left:238px;top:174.1px;width:1px;height:95.1px;background:#404040"></div><div class="a" style="left:238px;top:316.8px;width:1px;height:158.6px;background:#404040"></div><div class="a" style="left:238px;top:522.9px;width:1px;height:79.3px;background:#404040"></div><div class="a" style="left:238px;top:649.7px;width:1px;height:31.7px;background:#404040"></div><div class="a" style="left:238px;top:729.0px;width:1px;height:31.7px;background:#404040"></div><div class="a" style="left:238px;top:808.3px;width:1px;height:31.7px;background:#404040"></div><div class="a" style="left:788px;top:76px;width:1px;height:766px;background:#2b2b2b"></div><div class="a" style="left:789px;top:252px;width:10px;height:62px;background:#434343;opacity:.8"></div><div class="a" style="left:788px;top:77px;width:11px;height:2px;background:#6a6a6a"></div><div class="a" style="left:791px;top:78px;width:5px;height:4px;background:#8a8a8a"></div><div class="a" style="left:797px;top:308px;width:3px;height:5px;background:#3a8ee6"></div><div class="a" style="left:797px;top:317px;width:3px;height:5px;background:#3a8ee6"></div><div class="a" style="left:797px;top:633px;width:3px;height:4px;background:#3a8ee6"></div><div class="a" style="left:797px;top:679px;width:3px;height:4px;background:#3a8ee6"></div><div class="a" style="left:797px;top:688px;width:3px;height:5px;background:#3a8ee6"></div><div class="a" style="left:797px;top:701px;width:3px;height:10px;background:#3a8ee6"></div><div class="a" style="left:797px;top:717px;width:3px;height:4px;background:#3a8ee6"></div><div class="a" style="left:797px;top:733px;width:3px;height:10px;background:#3a8ee6"></div><div class="a" style="left:797px;top:745px;width:3px;height:5px;background:#3a8ee6"></div><div class="a" style="left:797px;top:754px;width:3px;height:15px;background:#3a8ee6"></div><svg class="a" style="left:0;top:0" width="800" height="860"><g opacity=".42"><rect x="726.5" y="77.00" width="9" height="1.1" fill="#d7ba7d"/><rect x="736.6" y="77.00" width="1.9000000000000004" height="1.1" fill="#d7ba7d"/><rect x="739.5" y="77.00" width="1.2" height="1.1" fill="#ffd700"/><rect x="729.8" y="78.67" width="9" height="1.1" fill="#9cdcfe"/><rect x="739.9" y="78.67" width="1.9000000000000004" height="1.1" fill="#9cdcfe"/><rect x="743.8" y="78.67" width="6" height="1.1" fill="#b5cea8"/><rect x="750.9" y="78.67" width="2.9000000000000004" height="1.1" fill="#b5cea8"/><rect x="729.8" y="80.34" width="3" height="1.1" fill="#9cdcfe"/><rect x="733.9" y="80.34" width="6" height="1.1" fill="#9cdcfe"/><rect x="741.0" y="80.34" width="2.8000000000000007" height="1.1" fill="#9cdcfe"/><rect x="745.8" y="80.34" width="4" height="1.1" fill="#b5cea8"/><rect x="729.8" y="82.01" width="5" height="1.1" fill="#9cdcfe"/><rect x="736.8" y="82.01" width="8" height="1.1" fill="#b5cea8"/><rect x="745.9" y="82.01" width="1.9000000000000004" height="1.1" fill="#b5cea8"/><rect x="729.8" y="83.68" width="3" height="1.1" fill="#9cdcfe"/><rect x="733.9" y="83.68" width="2.9000000000000004" height="1.1" fill="#9cdcfe"/><rect x="738.8" y="83.68" width="3" height="1.1" fill="#ce9178"/><rect x="742.9" y="83.68" width="4" height="1.1" fill="#ce9178"/><rect x="748.0" y="83.68" width="1.8000000000000007" height="1.1" fill="#ce9178"/><rect x="729.8" y="85.35" width="9" height="1.1" fill="#9cdcfe"/><rect x="739.9" y="85.35" width="3.9000000000000004" height="1.1" fill="#9cdcfe"/><rect x="745.8" y="85.35" width="2" height="1.1" fill="#b5cea8"/><rect x="726.5" y="87.02" width="1.2" height="1.1" fill="#ffd700"/><rect x="726.5" y="90.36" width="7" height="1.1" fill="#d7ba7d"/><rect x="734.5" y="90.36" width="1.2" height="1.1" fill="#ffd700"/><rect x="729.8" y="92.03" width="3" height="1.1" fill="#9cdcfe"/><rect x="733.9" y="92.03" width="4.9" height="1.1" fill="#9cdcfe"/><rect x="740.8" y="92.03" width="6" height="1.1" fill="#ce9178"/><rect x="747.9" y="92.03" width="7" height="1.1" fill="#ce9178"/><rect x="756.0" y="92.03" width="9" height="1.1" fill="#ce9178"/><rect x="766.1" y="92.03" width="3" height="1.1" fill="#ce9178"/><rect x="770.2" y="92.03" width="8" height="1.1" fill="#ce9178"/><rect x="779.3" y="92.03" width="1.4999999999999982" height="1.1" fill="#ce9178"/><rect x="729.8" y="93.70" width="7" height="1.1" fill="#9cdcfe"/><rect x="737.9" y="93.70" width="1.9000000000000004" height="1.1" fill="#9cdcfe"/><rect x="741.8" y="93.70" width="6" height="1.1" fill="#ce9178"/><rect x="748.9" y="93.70" width="3" height="1.1" fill="#ce9178"/><rect x="753.0" y="93.70" width="9" height="1.1" fill="#ce9178"/><rect x="763.1" y="93.70" width="5" height="1.1" fill="#ce9178"/><rect x="769.2" y="93.70" width="6" height="1.1" fill="#ce9178"/><rect x="776.3" y="93.70" width="3" height="1.1" fill="#ce9178"/><rect x="726.5" y="95.37" width="1.2" height="1.1" fill="#ffd700"/><rect x="726.5" y="98.71" width="5" height="1.1" fill="#d7ba7d"/><rect x="732.5" y="98.71" width="1.2" height="1.1" fill="#ffd700"/><rect x="729.8" y="100.38" width="3" height="1.1" fill="#9cdcfe"/><rect x="733.9" y="100.38" width="3.9000000000000004" height="1.1" fill="#9cdcfe"/><rect x="739.8" y="100.38" width="5" height="1.1" fill="#b5cea8"/><rect x="726.5" y="102.05" width="1.2" height="1.1" fill="#ffd700"/><rect x="726.5" y="105.39" width="3" height="1.1" fill="#d7ba7d"/><rect x="730.6" y="105.39" width="7" height="1.1" fill="#d7ba7d"/><rect x="739.5" y="105.39" width="1.2" height="1.1" fill="#ffd700"/><rect x="729.8" y="107.06" width="3" height="1.1" fill="#9cdcfe"/><rect x="733.9" y="107.06" width="4.9" height="1.1" fill="#9cdcfe"/><rect x="740.8" y="107.06" width="7" height="1.1" fill="#ce9178"/><rect x="729.8" y="108.73" width="4" height="1.1" fill="#9cdcfe"/><rect x="734.9" y="108.73" width="0.9000000000000004" height="1.1" fill="#9cdcfe"/><rect x="737.8" y="108.73" width="4" height="1.1" fill="#ce9178"/><rect x="726.5" y="110.40" width="1.2" height="1.1" fill="#ffd700"/><rect x="726.5" y="113.74" width="4" height="1.1" fill="#d7ba7d"/><rect x="731.6" y="113.74" width="6.9" height="1.1" fill="#d7ba7d"/><rect x="739.5" y="113.74" width="1.2" height="1.1" fill="#ffd700"/><rect x="729.8" y="115.41" width="7" height="1.1" fill="#9cdcfe"/><rect x="739.8" y="115.41" width="9" height="1.1" fill="#b5cea8"/><rect x="729.8" y="117.08" width="7" height="1.1" fill="#9cdcfe"/><rect x="738.8" y="117.08" width="6" height="1.1" fill="#ce9178"/><rect x="745.9" y="117.08" width="0.9000000000000004" height="1.1" fill="#ce9178"/><rect x="729.8" y="118.75" width="5" height="1.1" fill="#9cdcfe"/><rect x="736.8" y="118.75" width="5" height="1.1" fill="#b5cea8"/><rect x="729.8" y="120.42" width="4" height="1.1" fill="#9cdcfe"/><rect x="736.8" y="120.42" width="5" height="1.1" fill="#b5cea8"/><rect x="729.8" y="122.09" width="3" height="1.1" fill="#9cdcfe"/><rect x="733.9" y="122.09" width="4" height="1.1" fill="#9cdcfe"/><rect x="739.0" y="122.09" width="4" height="1.1" fill="#9cdcfe"/><rect x="745.8" y="122.09" width="3" height="1.1" fill="#ce9178"/><rect x="729.8" y="123.76" width="9" height="1.1" fill="#9cdcfe"/><rect x="739.9" y="123.76" width="3.9000000000000004" height="1.1" fill="#9cdcfe"/><rect x="745.8" y="123.76" width="3" height="1.1" fill="#ce9178"/><rect x="749.9" y="123.76" width="2.9000000000000004" height="1.1" fill="#ce9178"/><rect x="726.5" y="125.43" width="1.2" height="1.1" fill="#ffd700"/><rect x="726.5" y="128.77" width="8" height="1.1" fill="#d7ba7d"/><rect x="735.6" y="128.77" width="4" height="1.1" fill="#d7ba7d"/><rect x="740.7" y="128.77" width="0.8000000000000007" height="1.1" fill="#d7ba7d"/><rect x="742.5" y="128.77" width="1.2" height="1.1" fill="#ffd700"/><rect x="729.8" y="130.44" width="6" height="1.1" fill="#9cdcfe"/><rect x="736.9" y="130.44" width="2.9000000000000004" height="1.1" fill="#9cdcfe"/><rect x="741.8" y="130.44" width="9" height="1.1" fill="#ce9178"/><rect x="751.9" y="130.44" width="0.9000000000000004" height="1.1" fill="#ce9178"/><rect x="729.8" y="132.11" width="4" height="1.1" fill="#9cdcfe"/><rect x="734.9" y="132.11" width="1.9000000000000004" height="1.1" fill="#9cdcfe"/><rect x="738.8" y="132.11" width="8" height="1.1" fill="#ce9178"/><rect x="729.8" y="133.78" width="8" height="1.1" fill="#9cdcfe"/><rect x="738.9" y="133.78" width="4" height="1.1" fill="#9cdcfe"/><rect x="745.8" y="133.78" width="5" height="1.1" fill="#b5cea8"/><rect x="726.5" y="135.45" width="1.2" height="1.1" fill="#ffd700"/><rect x="726.5" y="138.79" width="7" height="1.1" fill="#d7ba7d"/><rect x="734.5" y="138.79" width="1.2" height="1.1" fill="#ffd700"/><rect x="729.8" y="140.46" width="3" height="1.1" fill="#9cdcfe"/><rect x="733.9" y="140.46" width="6" height="1.1" fill="#9cdcfe"/><rect x="741.0" y="140.46" width="0.8000000000000007" height="1.1" fill="#9cdcfe"/><rect x="743.8" y="140.46" width="7" height="1.1" fill="#ce9178"/><rect x="751.9" y="140.46" width="2.9000000000000004" height="1.1" fill="#ce9178"/><rect x="729.8" y="142.13" width="5" height="1.1" fill="#9cdcfe"/><rect x="735.9" y="142.13" width="1.9000000000000004" height="1.1" fill="#9cdcfe"/><rect x="739.8" y="142.13" width="6" height="1.1" fill="#b5cea8"/><rect x="746.9" y="142.13" width="0.9000000000000004" height="1.1" fill="#b5cea8"/><rect x="729.8" y="143.80" width="8" height="1.1" fill="#9cdcfe"/><rect x="738.9" y="143.80" width="3" height="1.1" fill="#9cdcfe"/><rect x="744.8" y="143.80" width="4" height="1.1" fill="#ce9178"/><rect x="729.8" y="145.47" width="3" height="1.1" fill="#9cdcfe"/><rect x="733.9" y="145.47" width="5" height="1.1" fill="#9cdcfe"/><rect x="740.0" y="145.47" width="3.8000000000000007" height="1.1" fill="#9cdcfe"/><rect x="745.8" y="145.47" width="8" height="1.1" fill="#ce9178"/><rect x="754.9" y="145.47" width="1.9000000000000004" height="1.1" fill="#ce9178"/><rect x="726.5" y="147.14" width="1.2" height="1.1" fill="#ffd700"/><rect x="726.5" y="150.48" width="5" height="1.1" fill="#d7ba7d"/><rect x="732.5" y="150.48" width="1.2" height="1.1" fill="#ffd700"/><rect x="729.8" y="152.15" width="3" height="1.1" fill="#9cdcfe"/><rect x="733.9" y="152.15" width="3" height="1.1" fill="#9cdcfe"/><rect x="738.0" y="152.15" width="3.8000000000000007" height="1.1" fill="#9cdcfe"/><rect x="743.8" y="152.15" width="5" height="1.1" fill="#b5cea8"/><rect x="729.8" y="153.82" width="5" height="1.1" fill="#9cdcfe"/><rect x="735.9" y="153.82" width="0.9000000000000004" height="1.1" fill="#9cdcfe"/><rect x="738.8" y="153.82" width="3" height="1.1" fill="#ce9178"/><rect x="729.8" y="155.49" width="4" height="1.1" fill="#9cdcfe"/><rect x="734.9" y="155.49" width="7" height="1.1" fill="#9cdcfe"/><rect x="744.8" y="155.49" width="5" height="1.1" fill="#ce9178"/><rect x="750.9" y="155.49" width="8" height="1.1" fill="#ce9178"/><rect x="760.0" y="155.49" width="4.800000000000001" height="1.1" fill="#ce9178"/><rect x="729.8" y="157.16" width="5" height="1.1" fill="#9cdcfe"/><rect x="736.8" y="157.16" width="2" height="1.1" fill="#ce9178"/><rect x="726.5" y="158.83" width="1.2" height="1.1" fill="#ffd700"/><rect x="726.5" y="162.17" width="5" height="1.1" fill="#d7ba7d"/><rect x="732.6" y="162.17" width="5" height="1.1" fill="#d7ba7d"/><rect x="738.7" y="162.17" width="4" height="1.1" fill="#d7ba7d"/><rect x="743.8" y="162.17" width="2.700000000000001" height="1.1" fill="#d7ba7d"/><rect x="747.5" y="162.17" width="1.2" height="1.1" fill="#ffd700"/><rect x="729.8" y="163.84" width="5" height="1.1" fill="#9cdcfe"/><rect x="735.9" y="163.84" width="5.9" height="1.1" fill="#9cdcfe"/><rect x="743.8" y="163.84" width="5" height="1.1" fill="#ce9178"/><rect x="749.9" y="163.84" width="3" height="1.1" fill="#ce9178"/><rect x="754.0" y="163.84" width="8" height="1.1" fill="#ce9178"/><rect x="763.1" y="163.84" width="4.699999999999999" height="1.1" fill="#ce9178"/><rect x="726.5" y="165.51" width="1.2" height="1.1" fill="#ffd700"/><rect x="726.5" y="168.85" width="5" height="1.1" fill="#d7ba7d"/><rect x="732.5" y="168.85" width="1.2" height="1.1" fill="#ffd700"/><rect x="729.8" y="170.52" width="5" height="1.1" fill="#9cdcfe"/><rect x="736.8" y="170.52" width="7" height="1.1" fill="#ce9178"/><rect x="744.9" y="170.52" width="3" height="1.1" fill="#ce9178"/><rect x="749.0" y="170.52" width="7" height="1.1" fill="#ce9178"/><rect x="757.1" y="170.52" width="3" height="1.1" fill="#ce9178"/><rect x="761.2" y="170.52" width="3" height="1.1" fill="#ce9178"/><rect x="765.3" y="170.52" width="3" height="1.1" fill="#ce9178"/><rect x="729.8" y="172.19" width="6" height="1.1" fill="#9cdcfe"/><rect x="737.8" y="172.19" width="6" height="1.1" fill="#ce9178"/><rect x="729.8" y="173.86" width="6" height="1.1" fill="#9cdcfe"/><rect x="736.9" y="173.86" width="6" height="1.1" fill="#9cdcfe"/><rect x="745.8" y="173.86" width="7" height="1.1" fill="#ce9178"/><rect x="753.9" y="173.86" width="0.9000000000000004" height="1.1" fill="#ce9178"/><rect x="729.8" y="175.53" width="5" height="1.1" fill="#9cdcfe"/><rect x="735.9" y="175.53" width="6.9" height="1.1" fill="#9cdcfe"/><rect x="744.8" y="175.53" width="8" height="1.1" fill="#ce9178"/><rect x="753.9" y="175.53" width="3" height="1.1" fill="#ce9178"/><rect x="758.0" y="175.53" width="6" height="1.1" fill="#ce9178"/><rect x="726.5" y="177.20" width="1.2" height="1.1" fill="#ffd700"/><rect x="726.5" y="180.54" width="8" height="1.1" fill="#d7ba7d"/><rect x="735.6" y="180.54" width="5.9" height="1.1" fill="#d7ba7d"/><rect x="742.5" y="180.54" width="1.2" height="1.1" fill="#ffd700"/><rect x="729.8" y="182.21" width="5" height="1.1" fill="#9cdcfe"/><rect x="736.8" y="182.21" width="4" height="1.1" fill="#b5cea8"/><rect x="741.9" y="182.21" width="1.9000000000000004" height="1.1" fill="#b5cea8"/><rect x="729.8" y="183.88" width="7" height="1.1" fill="#9cdcfe"/><rect x="738.8" y="183.88" width="4" height="1.1" fill="#ce9178"/><rect x="743.9" y="183.88" width="1.9000000000000004" height="1.1" fill="#ce9178"/><rect x="729.8" y="185.55" width="5" height="1.1" fill="#9cdcfe"/><rect x="735.9" y="185.55" width="4" height="1.1" fill="#9cdcfe"/><rect x="742.8" y="185.55" width="4" height="1.1" fill="#ce9178"/><rect x="747.9" y="185.55" width="6" height="1.1" fill="#ce9178"/><rect x="726.5" y="187.22" width="1.2" height="1.1" fill="#ffd700"/><rect x="726.5" y="190.56" width="7" height="1.1" fill="#d7ba7d"/><rect x="734.5" y="190.56" width="1.2" height="1.1" fill="#ffd700"/><rect x="729.8" y="192.23" width="4" height="1.1" fill="#9cdcfe"/><rect x="734.9" y="192.23" width="2.9000000000000004" height="1.1" fill="#9cdcfe"/><rect x="739.8" y="192.23" width="4" height="1.1" fill="#ce9178"/><rect x="729.8" y="193.90" width="6" height="1.1" fill="#9cdcfe"/><rect x="737.8" y="193.90" width="6" height="1.1" fill="#ce9178"/><rect x="729.8" y="195.57" width="9" height="1.1" fill="#9cdcfe"/><rect x="740.8" y="195.57" width="5" height="1.1" fill="#b5cea8"/><rect x="726.5" y="197.24" width="1.2" height="1.1" fill="#ffd700"/><rect x="726.5" y="200.58" width="8" height="1.1" fill="#d7ba7d"/><rect x="735.6" y="200.58" width="2.9000000000000004" height="1.1" fill="#d7ba7d"/><rect x="739.5" y="200.58" width="1.2" height="1.1" fill="#ffd700"/><rect x="729.8" y="202.25" width="9" height="1.1" fill="#9cdcfe"/><rect x="741.8" y="202.25" width="8" height="1.1" fill="#ce9178"/><rect x="750.9" y="202.25" width="8" height="1.1" fill="#ce9178"/><rect x="760.0" y="202.25" width="5" height="1.1" fill="#ce9178"/><rect x="766.1" y="202.25" width="7" height="1.1" fill="#ce9178"/><rect x="774.2" y="202.25" width="5" height="1.1" fill="#ce9178"/><rect x="780.3" y="202.25" width="0.4999999999999982" height="1.1" fill="#ce9178"/><rect x="729.8" y="203.92" width="8" height="1.1" fill="#9cdcfe"/><rect x="738.9" y="203.92" width="4" height="1.1" fill="#9cdcfe"/><rect x="745.8" y="203.92" width="2" height="1.1" fill="#ce9178"/><rect x="729.8" y="205.59" width="9" height="1.1" fill="#9cdcfe"/><rect x="740.8" y="205.59" width="5" height="1.1" fill="#ce9178"/><rect x="729.8" y="207.26" width="3" height="1.1" fill="#9cdcfe"/><rect x="733.9" y="207.26" width="1.9000000000000004" height="1.1" fill="#9cdcfe"/><rect x="737.8" y="207.26" width="9" height="1.1" fill="#b5cea8"/><rect x="729.8" y="208.93" width="8" height="1.1" fill="#9cdcfe"/><rect x="738.9" y="208.93" width="0.9000000000000004" height="1.1" fill="#9cdcfe"/><rect x="741.8" y="208.93" width="3" height="1.1" fill="#ce9178"/><rect x="726.5" y="210.60" width="1.2" height="1.1" fill="#ffd700"/><rect x="726.5" y="213.94" width="7" height="1.1" fill="#d7ba7d"/><rect x="734.5" y="213.94" width="1.2" height="1.1" fill="#ffd700"/><rect x="729.8" y="215.61" width="8" height="1.1" fill="#9cdcfe"/><rect x="738.9" y="215.61" width="2.9000000000000004" height="1.1" fill="#9cdcfe"/><rect x="743.8" y="215.61" width="9" height="1.1" fill="#ce9178"/><rect x="726.5" y="217.28" width="1.2" height="1.1" fill="#ffd700"/><rect x="726.5" y="220.62" width="7" height="1.1" fill="#d7ba7d"/><rect x="734.6" y="220.62" width="0.9000000000000004" height="1.1" fill="#d7ba7d"/><rect x="736.5" y="220.62" width="1.2" height="1.1" fill="#ffd700"/><rect x="729.8" y="222.29" width="9" height="1.1" fill="#9cdcfe"/><rect x="739.9" y="222.29" width="2.9000000000000004" height="1.1" fill="#9cdcfe"/><rect x="744.8" y="222.29" width="4" height="1.1" fill="#b5cea8"/><rect x="749.9" y="222.29" width="3" height="1.1" fill="#b5cea8"/><rect x="754.0" y="222.29" width="1.8000000000000007" height="1.1" fill="#b5cea8"/><rect x="729.8" y="223.96" width="6" height="1.1" fill="#9cdcfe"/><rect x="736.9" y="223.96" width="3.9000000000000004" height="1.1" fill="#9cdcfe"/><rect x="742.8" y="223.96" width="4" height="1.1" fill="#ce9178"/><rect x="729.8" y="225.63" width="8" height="1.1" fill="#9cdcfe"/><rect x="738.9" y="225.63" width="3.9000000000000004" height="1.1" fill="#9cdcfe"/><rect x="744.8" y="225.63" width="6" height="1.1" fill="#ce9178"/><rect x="751.9" y="225.63" width="3.9000000000000004" height="1.1" fill="#ce9178"/><rect x="729.8" y="227.30" width="8" height="1.1" fill="#9cdcfe"/><rect x="739.8" y="227.30" width="3" height="1.1" fill="#b5cea8"/><rect x="729.8" y="228.97" width="4" height="1.1" fill="#9cdcfe"/><rect x="734.9" y="228.97" width="0.9000000000000004" height="1.1" fill="#9cdcfe"/><rect x="737.8" y="228.97" width="5" height="1.1" fill="#ce9178"/><rect x="729.8" y="230.64" width="8" height="1.1" fill="#9cdcfe"/><rect x="738.9" y="230.64" width="0.9000000000000004" height="1.1" fill="#9cdcfe"/><rect x="741.8" y="230.64" width="3" height="1.1" fill="#ce9178"/><rect x="745.9" y="230.64" width="6" height="1.1" fill="#ce9178"/><rect x="753.0" y="230.64" width="5" height="1.1" fill="#ce9178"/><rect x="759.1" y="230.64" width="7" height="1.1" fill="#ce9178"/><rect x="767.2" y="230.64" width="6" height="1.1" fill="#ce9178"/><rect x="774.3" y="230.64" width="3.4999999999999964" height="1.1" fill="#ce9178"/><rect x="726.5" y="232.31" width="1.2" height="1.1" fill="#ffd700"/><rect x="726.5" y="235.65" width="6" height="1.1" fill="#d7ba7d"/><rect x="733.6" y="235.65" width="1.9000000000000004" height="1.1" fill="#d7ba7d"/><rect x="736.5" y="235.65" width="1.2" height="1.1" fill="#ffd700"/><rect x="729.8" y="237.32" width="6" height="1.1" fill="#9cdcfe"/><rect x="737.8" y="237.32" width="8" height="1.1" fill="#ce9178"/><rect x="746.9" y="237.32" width="9" height="1.1" fill="#ce9178"/><rect x="757.0" y="237.32" width="4" height="1.1" fill="#ce9178"/><rect x="762.1" y="237.32" width="6" height="1.1" fill="#ce9178"/><rect x="769.2" y="237.32" width="4" height="1.1" fill="#ce9178"/><rect x="774.3" y="237.32" width="0.4999999999999982" height="1.1" fill="#ce9178"/><rect x="729.8" y="238.99" width="8" height="1.1" fill="#9cdcfe"/><rect x="738.9" y="238.99" width="3.9000000000000004" height="1.1" fill="#9cdcfe"/><rect x="744.8" y="238.99" width="7" height="1.1" fill="#ce9178"/><rect x="752.9" y="238.99" width="3.9000000000000004" height="1.1" fill="#ce9178"/><rect x="726.5" y="240.66" width="1.2" height="1.1" fill="#ffd700"/><rect x="726.5" y="244.00" width="5" height="1.1" fill="#d7ba7d"/><rect x="732.5" y="244.00" width="1.2" height="1.1" fill="#ffd700"/><rect x="729.8" y="245.67" width="7" height="1.1" fill="#9cdcfe"/><rect x="737.9" y="245.67" width="3.9000000000000004" height="1.1" fill="#9cdcfe"/><rect x="743.8" y="245.67" width="8" height="1.1" fill="#b5cea8"/><rect x="752.9" y="245.67" width="0.9000000000000004" height="1.1" fill="#b5cea8"/><rect x="729.8" y="247.34" width="9" height="1.1" fill="#9cdcfe"/><rect x="739.9" y="247.34" width="2.9000000000000004" height="1.1" fill="#9cdcfe"/><rect x="744.8" y="247.34" width="6" height="1.1" fill="#b5cea8"/><rect x="751.9" y="247.34" width="2.9000000000000004" height="1.1" fill="#b5cea8"/><rect x="726.5" y="249.01" width="1.2" height="1.1" fill="#ffd700"/><rect x="726.5" y="252.35" width="4" height="1.1" fill="#d7ba7d"/><rect x="731.6" y="252.35" width="5" height="1.1" fill="#d7ba7d"/><rect x="737.7" y="252.35" width="3.8000000000000007" height="1.1" fill="#d7ba7d"/><rect x="742.5" y="252.35" width="1.2" height="1.1" fill="#ffd700"/><rect x="729.8" y="254.02" width="5" height="1.1" fill="#9cdcfe"/><rect x="735.9" y="254.02" width="6.9" height="1.1" fill="#9cdcfe"/><rect x="744.8" y="254.02" width="7" height="1.1" fill="#ce9178"/><rect x="752.9" y="254.02" width="1.9000000000000004" height="1.1" fill="#ce9178"/><rect x="729.8" y="255.69" width="7" height="1.1" fill="#9cdcfe"/><rect x="737.9" y="255.69" width="4.9" height="1.1" fill="#9cdcfe"/><rect x="744.8" y="255.69" width="6" height="1.1" fill="#b5cea8"/><rect x="751.9" y="255.69" width="7" height="1.1" fill="#b5cea8"/><rect x="760.0" y="255.69" width="5.800000000000001" height="1.1" fill="#b5cea8"/><rect x="726.5" y="257.36" width="1.2" height="1.1" fill="#ffd700"/><rect x="726.5" y="260.70" width="3" height="1.1" fill="#d7ba7d"/><rect x="730.6" y="260.70" width="6" height="1.1" fill="#d7ba7d"/><rect x="737.7" y="260.70" width="3" height="1.1" fill="#d7ba7d"/><rect x="742.5" y="260.70" width="1.2" height="1.1" fill="#ffd700"/><rect x="729.8" y="262.37" width="6" height="1.1" fill="#9cdcfe"/><rect x="737.8" y="262.37" width="5" height="1.1" fill="#ce9178"/><rect x="743.9" y="262.37" width="3.9000000000000004" height="1.1" fill="#ce9178"/><rect x="729.8" y="264.04" width="4" height="1.1" fill="#9cdcfe"/><rect x="734.9" y="264.04" width="5" height="1.1" fill="#9cdcfe"/><rect x="741.0" y="264.04" width="0.8000000000000007" height="1.1" fill="#9cdcfe"/><rect x="743.8" y="264.04" width="7" height="1.1" fill="#ce9178"/><rect x="751.9" y="264.04" width="0.9000000000000004" height="1.1" fill="#ce9178"/><rect x="726.5" y="265.71" width="1.2" height="1.1" fill="#ffd700"/><rect x="726.5" y="269.05" width="4" height="1.1" fill="#d7ba7d"/><rect x="732.5" y="269.05" width="1.2" height="1.1" fill="#ffd700"/><rect x="729.8" y="270.72" width="5" height="1.1" fill="#9cdcfe"/><rect x="735.9" y="270.72" width="4" height="1.1" fill="#9cdcfe"/><rect x="741.0" y="270.72" width="2.8000000000000007" height="1.1" fill="#9cdcfe"/><rect x="745.8" y="270.72" width="2" height="1.1" fill="#ce9178"/><rect x="729.8" y="272.39" width="4" height="1.1" fill="#9cdcfe"/><rect x="734.9" y="272.39" width="2.9000000000000004" height="1.1" fill="#9cdcfe"/><rect x="739.8" y="272.39" width="4" height="1.1" fill="#ce9178"/><rect x="729.8" y="274.06" width="7" height="1.1" fill="#9cdcfe"/><rect x="737.9" y="274.06" width="1.9000000000000004" height="1.1" fill="#9cdcfe"/><rect x="741.8" y="274.06" width="5" height="1.1" fill="#b5cea8"/><rect x="729.8" y="275.73" width="6" height="1.1" fill="#9cdcfe"/><rect x="737.8" y="275.73" width="8" height="1.1" fill="#ce9178"/><rect x="746.9" y="275.73" width="0.9000000000000004" height="1.1" fill="#ce9178"/><rect x="726.5" y="277.40" width="1.2" height="1.1" fill="#ffd700"/><rect x="726.5" y="280.74" width="3" height="1.1" fill="#d7ba7d"/><rect x="730.6" y="280.74" width="6" height="1.1" fill="#d7ba7d"/><rect x="737.7" y="280.74" width="0.8000000000000007" height="1.1" fill="#d7ba7d"/><rect x="739.5" y="280.74" width="1.2" height="1.1" fill="#ffd700"/><rect x="729.8" y="282.41" width="4" height="1.1" fill="#9cdcfe"/><rect x="734.9" y="282.41" width="7" height="1.1" fill="#9cdcfe"/><rect x="744.8" y="282.41" width="7" height="1.1" fill="#b5cea8"/><rect x="752.9" y="282.41" width="2.9000000000000004" height="1.1" fill="#b5cea8"/><rect x="729.8" y="284.08" width="4" height="1.1" fill="#9cdcfe"/><rect x="734.9" y="284.08" width="2.9000000000000004" height="1.1" fill="#9cdcfe"/><rect x="739.8" y="284.08" width="9" height="1.1" fill="#b5cea8"/><rect x="729.8" y="285.75" width="7" height="1.1" fill="#9cdcfe"/><rect x="738.8" y="285.75" width="4" height="1.1" fill="#ce9178"/><rect x="729.8" y="287.42" width="5" height="1.1" fill="#9cdcfe"/><rect x="735.9" y="287.42" width="3.9000000000000004" height="1.1" fill="#9cdcfe"/><rect x="741.8" y="287.42" width="3" height="1.1" fill="#ce9178"/><rect x="745.9" y="287.42" width="4" height="1.1" fill="#ce9178"/><rect x="751.0" y="287.42" width="1.8000000000000007" height="1.1" fill="#ce9178"/><rect x="726.5" y="289.09" width="1.2" height="1.1" fill="#ffd700"/><rect x="726.5" y="292.43" width="7" height="1.1" fill="#d7ba7d"/><rect x="734.5" y="292.43" width="1.2" height="1.1" fill="#ffd700"/><rect x="729.8" y="294.10" width="3" height="1.1" fill="#9cdcfe"/><rect x="733.9" y="294.10" width="4.9" height="1.1" fill="#9cdcfe"/><rect x="740.8" y="294.10" width="7" height="1.1" fill="#ce9178"/><rect x="726.5" y="295.77" width="1.2" height="1.1" fill="#ffd700"/><rect x="726.5" y="299.11" width="4" height="1.1" fill="#d7ba7d"/><rect x="731.6" y="299.11" width="4" height="1.1" fill="#d7ba7d"/><rect x="736.7" y="299.11" width="6" height="1.1" fill="#d7ba7d"/><rect x="743.8" y="299.11" width="2.700000000000001" height="1.1" fill="#d7ba7d"/><rect x="747.5" y="299.11" width="1.2" height="1.1" fill="#ffd700"/><rect x="729.8" y="300.78" width="6" height="1.1" fill="#9cdcfe"/><rect x="737.8" y="300.78" width="3" height="1.1" fill="#ce9178"/><rect x="741.9" y="300.78" width="0.9000000000000004" height="1.1" fill="#ce9178"/><rect x="726.5" y="302.45" width="1.2" height="1.1" fill="#ffd700"/><rect x="726.5" y="305.79" width="8" height="1.1" fill="#d7ba7d"/><rect x="735.6" y="305.79" width="5.9" height="1.1" fill="#d7ba7d"/><rect x="742.5" y="305.79" width="1.2" height="1.1" fill="#ffd700"/><rect x="729.8" y="307.46" width="9" height="1.1" fill="#9cdcfe"/><rect x="739.9" y="307.46" width="2.9000000000000004" height="1.1" fill="#9cdcfe"/><rect x="744.8" y="307.46" width="3" height="1.1" fill="#ce9178"/><rect x="748.9" y="307.46" width="3" height="1.1" fill="#ce9178"/><rect x="753.0" y="307.46" width="3" height="1.1" fill="#ce9178"/><rect x="729.8" y="309.13" width="7" height="1.1" fill="#9cdcfe"/><rect x="737.9" y="309.13" width="4.9" height="1.1" fill="#9cdcfe"/><rect x="744.8" y="309.13" width="4" height="1.1" fill="#ce9178"/><rect x="749.9" y="309.13" width="3" height="1.1" fill="#ce9178"/><rect x="754.0" y="309.13" width="1.8000000000000007" height="1.1" fill="#ce9178"/><rect x="729.8" y="310.80" width="5" height="1.1" fill="#9cdcfe"/><rect x="735.9" y="310.80" width="0.9000000000000004" height="1.1" fill="#9cdcfe"/><rect x="738.8" y="310.80" width="8" height="1.1" fill="#ce9178"/><rect x="747.9" y="310.80" width="6" height="1.1" fill="#ce9178"/><rect x="755.0" y="310.80" width="3" height="1.1" fill="#ce9178"/><rect x="759.1" y="310.80" width="0.7000000000000011" height="1.1" fill="#ce9178"/><rect x="726.5" y="312.47" width="1.2" height="1.1" fill="#ffd700"/><rect x="726.5" y="315.81" width="5" height="1.1" fill="#d7ba7d"/><rect x="732.5" y="315.81" width="1.2" height="1.1" fill="#ffd700"/><rect x="729.8" y="317.48" width="7" height="1.1" fill="#9cdcfe"/><rect x="737.9" y="317.48" width="3.9000000000000004" height="1.1" fill="#9cdcfe"/><rect x="743.8" y="317.48" width="5" height="1.1" fill="#b5cea8"/><rect x="749.9" y="317.48" width="1.9000000000000004" height="1.1" fill="#b5cea8"/><rect x="729.8" y="319.15" width="4" height="1.1" fill="#9cdcfe"/><rect x="736.8" y="319.15" width="5" height="1.1" fill="#ce9178"/><rect x="729.8" y="320.82" width="4" height="1.1" fill="#9cdcfe"/><rect x="734.9" y="320.82" width="4.9" height="1.1" fill="#9cdcfe"/><rect x="741.8" y="320.82" width="8" height="1.1" fill="#b5cea8"/><rect x="729.8" y="322.49" width="3" height="1.1" fill="#9cdcfe"/><rect x="733.9" y="322.49" width="0.9000000000000004" height="1.1" fill="#9cdcfe"/><rect x="736.8" y="322.49" width="6" height="1.1" fill="#b5cea8"/><rect x="726.5" y="324.16" width="1.2" height="1.1" fill="#ffd700"/><rect x="726.5" y="327.50" width="7" height="1.1" fill="#d7ba7d"/><rect x="734.6" y="327.50" width="4" height="1.1" fill="#d7ba7d"/><rect x="739.7" y="327.50" width="1.8000000000000007" height="1.1" fill="#d7ba7d"/><rect x="742.5" y="327.50" width="1.2" height="1.1" fill="#ffd700"/><rect x="729.8" y="329.17" width="3" height="1.1" fill="#9cdcfe"/><rect x="733.9" y="329.17" width="4.9" height="1.1" fill="#9cdcfe"/><rect x="740.8" y="329.17" width="6" height="1.1" fill="#ce9178"/><rect x="729.8" y="330.84" width="5" height="1.1" fill="#9cdcfe"/><rect x="735.9" y="330.84" width="4.9" height="1.1" fill="#9cdcfe"/><rect x="742.8" y="330.84" width="4" height="1.1" fill="#ce9178"/><rect x="729.8" y="332.51" width="4" height="1.1" fill="#9cdcfe"/><rect x="734.9" y="332.51" width="1.9000000000000004" height="1.1" fill="#9cdcfe"/><rect x="738.8" y="332.51" width="5" height="1.1" fill="#ce9178"/><rect x="744.9" y="332.51" width="1.9000000000000004" height="1.1" fill="#ce9178"/><rect x="726.5" y="334.18" width="1.2" height="1.1" fill="#ffd700"/><rect x="726.5" y="337.52" width="3" height="1.1" fill="#d7ba7d"/><rect x="730.6" y="337.52" width="0.9000000000000004" height="1.1" fill="#d7ba7d"/><rect x="732.5" y="337.52" width="1.2" height="1.1" fill="#ffd700"/><rect x="729.8" y="339.19" width="8" height="1.1" fill="#9cdcfe"/><rect x="739.8" y="339.19" width="6" height="1.1" fill="#ce9178"/><rect x="726.5" y="340.86" width="1.2" height="1.1" fill="#ffd700"/><rect x="726.5" y="344.20" width="7" height="1.1" fill="#d7ba7d"/><rect x="734.6" y="344.20" width="3.9000000000000004" height="1.1" fill="#d7ba7d"/><rect x="739.5" y="344.20" width="1.2" height="1.1" fill="#ffd700"/><rect x="729.8" y="345.87" width="6" height="1.1" fill="#9cdcfe"/><rect x="737.8" y="345.87" width="4" height="1.1" fill="#b5cea8"/><rect x="742.9" y="345.87" width="2.9000000000000004" height="1.1" fill="#b5cea8"/><rect x="729.8" y="347.54" width="6" height="1.1" fill="#9cdcfe"/><rect x="737.8" y="347.54" width="8" height="1.1" fill="#ce9178"/><rect x="746.9" y="347.54" width="4" height="1.1" fill="#ce9178"/><rect x="752.0" y="347.54" width="5" height="1.1" fill="#ce9178"/><rect x="758.1" y="347.54" width="6" height="1.1" fill="#ce9178"/><rect x="765.2" y="347.54" width="6" height="1.1" fill="#ce9178"/><rect x="772.3" y="347.54" width="4.4999999999999964" height="1.1" fill="#ce9178"/><rect x="729.8" y="349.21" width="5" height="1.1" fill="#9cdcfe"/><rect x="736.8" y="349.21" width="5" height="1.1" fill="#ce9178"/><rect x="729.8" y="350.88" width="5" height="1.1" fill="#9cdcfe"/><rect x="735.9" y="350.88" width="2.9000000000000004" height="1.1" fill="#9cdcfe"/><rect x="740.8" y="350.88" width="6" height="1.1" fill="#ce9178"/><rect x="729.8" y="352.55" width="8" height="1.1" fill="#9cdcfe"/><rect x="738.9" y="352.55" width="4.9" height="1.1" fill="#9cdcfe"/><rect x="745.8" y="352.55" width="3" height="1.1" fill="#ce9178"/><rect x="729.8" y="354.22" width="9" height="1.1" fill="#9cdcfe"/><rect x="739.9" y="354.22" width="3" height="1.1" fill="#9cdcfe"/><rect x="745.8" y="354.22" width="6" height="1.1" fill="#ce9178"/><rect x="752.9" y="354.22" width="4.9" height="1.1" fill="#ce9178"/><rect x="726.5" y="355.89" width="1.2" height="1.1" fill="#ffd700"/><rect x="726.5" y="359.23" width="7" height="1.1" fill="#d7ba7d"/><rect x="734.5" y="359.23" width="1.2" height="1.1" fill="#ffd700"/><rect x="729.8" y="360.90" width="7" height="1.1" fill="#9cdcfe"/><rect x="737.9" y="360.90" width="3" height="1.1" fill="#9cdcfe"/><rect x="742.0" y="360.90" width="0.8000000000000007" height="1.1" fill="#9cdcfe"/><rect x="744.8" y="360.90" width="5" height="1.1" fill="#ce9178"/><rect x="750.9" y="360.90" width="4.9" height="1.1" fill="#ce9178"/><rect x="729.8" y="362.57" width="5" height="1.1" fill="#9cdcfe"/><rect x="735.9" y="362.57" width="4.9" height="1.1" fill="#9cdcfe"/><rect x="742.8" y="362.57" width="8" height="1.1" fill="#ce9178"/><rect x="751.9" y="362.57" width="1.9000000000000004" height="1.1" fill="#ce9178"/><rect x="729.8" y="364.24" width="8" height="1.1" fill="#9cdcfe"/><rect x="738.9" y="364.24" width="3.9000000000000004" height="1.1" fill="#9cdcfe"/><rect x="744.8" y="364.24" width="3" height="1.1" fill="#ce9178"/><rect x="748.9" y="364.24" width="1.9000000000000004" height="1.1" fill="#ce9178"/><rect x="729.8" y="365.91" width="3" height="1.1" fill="#9cdcfe"/><rect x="733.9" y="365.91" width="3.9000000000000004" height="1.1" fill="#9cdcfe"/><rect x="739.8" y="365.91" width="6" height="1.1" fill="#b5cea8"/><rect x="746.9" y="365.91" width="3" height="1.1" fill="#b5cea8"/><rect x="729.8" y="367.58" width="3" height="1.1" fill="#9cdcfe"/><rect x="733.9" y="367.58" width="5.9" height="1.1" fill="#9cdcfe"/><rect x="741.8" y="367.58" width="3" height="1.1" fill="#ce9178"/><rect x="745.9" y="367.58" width="3.9000000000000004" height="1.1" fill="#ce9178"/><rect x="726.5" y="369.25" width="1.2" height="1.1" fill="#ffd700"/><rect x="726.5" y="372.59" width="6" height="1.1" fill="#d7ba7d"/><rect x="734.5" y="372.59" width="1.2" height="1.1" fill="#ffd700"/><rect x="729.8" y="374.26" width="3" height="1.1" fill="#9cdcfe"/><rect x="733.9" y="374.26" width="4.9" height="1.1" fill="#9cdcfe"/><rect x="740.8" y="374.26" width="9" height="1.1" fill="#ce9178"/><rect x="750.9" y="374.26" width="4" height="1.1" fill="#ce9178"/><rect x="756.0" y="374.26" width="7" height="1.1" fill="#ce9178"/><rect x="764.1" y="374.26" width="8" height="1.1" fill="#ce9178"/><rect x="773.2" y="374.26" width="1.5999999999999979" height="1.1" fill="#ce9178"/><rect x="729.8" y="375.93" width="5" height="1.1" fill="#9cdcfe"/><rect x="736.8" y="375.93" width="9" height="1.1" fill="#ce9178"/><rect x="746.9" y="375.93" width="0.9000000000000004" height="1.1" fill="#ce9178"/><rect x="729.8" y="377.60" width="4" height="1.1" fill="#9cdcfe"/><rect x="734.9" y="377.60" width="3" height="1.1" fill="#9cdcfe"/><rect x="739.0" y="377.60" width="0.8000000000000007" height="1.1" fill="#9cdcfe"/><rect x="741.8" y="377.60" width="6" height="1.1" fill="#b5cea8"/><rect x="748.9" y="377.60" width="2.9000000000000004" height="1.1" fill="#b5cea8"/><rect x="729.8" y="379.27" width="8" height="1.1" fill="#9cdcfe"/><rect x="738.9" y="379.27" width="4.9" height="1.1" fill="#9cdcfe"/><rect x="745.8" y="379.27" width="6" height="1.1" fill="#ce9178"/><rect x="729.8" y="380.94" width="5" height="1.1" fill="#9cdcfe"/><rect x="735.9" y="380.94" width="6.9" height="1.1" fill="#9cdcfe"/><rect x="744.8" y="380.94" width="3" height="1.1" fill="#ce9178"/><rect x="726.5" y="382.61" width="1.2" height="1.1" fill="#ffd700"/><rect x="726.5" y="385.95" width="5" height="1.1" fill="#d7ba7d"/><rect x="732.6" y="385.95" width="8.9" height="1.1" fill="#d7ba7d"/><rect x="742.5" y="385.95" width="1.2" height="1.1" fill="#ffd700"/><rect x="729.8" y="387.62" width="5" height="1.1" fill="#9cdcfe"/><rect x="735.9" y="387.62" width="5" height="1.1" fill="#9cdcfe"/><rect x="742.0" y="387.62" width="1.8000000000000007" height="1.1" fill="#9cdcfe"/><rect x="745.8" y="387.62" width="7" height="1.1" fill="#b5cea8"/><rect x="729.8" y="389.29" width="8" height="1.1" fill="#9cdcfe"/><rect x="738.9" y="389.29" width="4.9" height="1.1" fill="#9cdcfe"/><rect x="745.8" y="389.29" width="4" height="1.1" fill="#ce9178"/><rect x="729.8" y="390.96" width="4" height="1.1" fill="#9cdcfe"/><rect x="734.9" y="390.96" width="7.9" height="1.1" fill="#9cdcfe"/><rect x="744.8" y="390.96" width="5" height="1.1" fill="#ce9178"/><rect x="750.9" y="390.96" width="5" height="1.1" fill="#ce9178"/><rect x="757.0" y="390.96" width="6" height="1.1" fill="#ce9178"/><rect x="764.1" y="390.96" width="1.700000000000001" height="1.1" fill="#ce9178"/><rect x="729.8" y="392.63" width="3" height="1.1" fill="#9cdcfe"/><rect x="733.9" y="392.63" width="4" height="1.1" fill="#9cdcfe"/><rect x="739.0" y="392.63" width="4.800000000000001" height="1.1" fill="#9cdcfe"/><rect x="745.8" y="392.63" width="2" height="1.1" fill="#ce9178"/><rect x="729.8" y="394.30" width="4" height="1.1" fill="#9cdcfe"/><rect x="734.9" y="394.30" width="1.9000000000000004" height="1.1" fill="#9cdcfe"/><rect x="738.8" y="394.30" width="6" height="1.1" fill="#ce9178"/><rect x="745.9" y="394.30" width="2.9000000000000004" height="1.1" fill="#ce9178"/><rect x="729.8" y="395.97" width="5" height="1.1" fill="#9cdcfe"/><rect x="735.9" y="395.97" width="1.9000000000000004" height="1.1" fill="#9cdcfe"/><rect x="739.8" y="395.97" width="7" height="1.1" fill="#ce9178"/><rect x="726.5" y="397.64" width="1.2" height="1.1" fill="#ffd700"/><rect x="726.5" y="400.98" width="5" height="1.1" fill="#d7ba7d"/><rect x="732.5" y="400.98" width="1.2" height="1.1" fill="#ffd700"/><rect x="729.8" y="402.65" width="8" height="1.1" fill="#9cdcfe"/><rect x="738.9" y="402.65" width="2.9000000000000004" height="1.1" fill="#9cdcfe"/><rect x="743.8" y="402.65" width="5" height="1.1" fill="#ce9178"/><rect x="749.9" y="402.65" width="1.9000000000000004" height="1.1" fill="#ce9178"/><rect x="729.8" y="404.32" width="5" height="1.1" fill="#9cdcfe"/><rect x="735.9" y="404.32" width="7" height="1.1" fill="#9cdcfe"/><rect x="745.8" y="404.32" width="6" height="1.1" fill="#ce9178"/><rect x="726.5" y="405.99" width="1.2" height="1.1" fill="#ffd700"/><rect x="726.5" y="409.33" width="5" height="1.1" fill="#d7ba7d"/><rect x="732.6" y="409.33" width="7" height="1.1" fill="#d7ba7d"/><rect x="740.7" y="409.33" width="3" height="1.1" fill="#d7ba7d"/><rect x="744.8" y="409.33" width="1.700000000000001" height="1.1" fill="#d7ba7d"/><rect x="747.5" y="409.33" width="1.2" height="1.1" fill="#ffd700"/><rect x="729.8" y="411.00" width="3" height="1.1" fill="#9cdcfe"/><rect x="733.9" y="411.00" width="1.9000000000000004" height="1.1" fill="#9cdcfe"/><rect x="737.8" y="411.00" width="9" height="1.1" fill="#ce9178"/><rect x="729.8" y="412.67" width="9" height="1.1" fill="#9cdcfe"/><rect x="739.9" y="412.67" width="1.9000000000000004" height="1.1" fill="#9cdcfe"/><rect x="743.8" y="412.67" width="8" height="1.1" fill="#ce9178"/><rect x="752.9" y="412.67" width="7" height="1.1" fill="#ce9178"/><rect x="761.0" y="412.67" width="3" height="1.1" fill="#ce9178"/><rect x="765.1" y="412.67" width="7.699999999999999" height="1.1" fill="#ce9178"/><rect x="729.8" y="414.34" width="8" height="1.1" fill="#9cdcfe"/><rect x="740.8" y="414.34" width="5" height="1.1" fill="#ce9178"/><rect x="746.9" y="414.34" width="2.9000000000000004" height="1.1" fill="#ce9178"/><rect x="726.5" y="416.01" width="1.2" height="1.1" fill="#ffd700"/><rect x="726.5" y="419.35" width="5" height="1.1" fill="#d7ba7d"/><rect x="732.6" y="419.35" width="0.9000000000000004" height="1.1" fill="#d7ba7d"/><rect x="734.5" y="419.35" width="1.2" height="1.1" fill="#ffd700"/><rect x="729.8" y="421.02" width="5" height="1.1" fill="#9cdcfe"/><rect x="735.9" y="421.02" width="3.9000000000000004" height="1.1" fill="#9cdcfe"/><rect x="741.8" y="421.02" width="3" height="1.1" fill="#b5cea8"/><rect x="729.8" y="422.69" width="7" height="1.1" fill="#9cdcfe"/><rect x="737.9" y="422.69" width="0.9000000000000004" height="1.1" fill="#9cdcfe"/><rect x="740.8" y="422.69" width="5" height="1.1" fill="#ce9178"/><rect x="746.9" y="422.69" width="2.9000000000000004" height="1.1" fill="#ce9178"/><rect x="729.8" y="424.36" width="4" height="1.1" fill="#9cdcfe"/><rect x="734.9" y="424.36" width="3" height="1.1" fill="#9cdcfe"/><rect x="739.0" y="424.36" width="1.8000000000000007" height="1.1" fill="#9cdcfe"/><rect x="742.8" y="424.36" width="5" height="1.1" fill="#ce9178"/><rect x="748.9" y="424.36" width="3.9000000000000004" height="1.1" fill="#ce9178"/><rect x="726.5" y="426.03" width="1.2" height="1.1" fill="#ffd700"/><rect x="726.5" y="429.37" width="7" height="1.1" fill="#d7ba7d"/><rect x="734.6" y="429.37" width="3.9000000000000004" height="1.1" fill="#d7ba7d"/><rect x="739.5" y="429.37" width="1.2" height="1.1" fill="#ffd700"/><rect x="729.8" y="431.04" width="9" height="1.1" fill="#9cdcfe"/><rect x="739.9" y="431.04" width="3.9000000000000004" height="1.1" fill="#9cdcfe"/><rect x="745.8" y="431.04" width="7" height="1.1" fill="#b5cea8"/><rect x="729.8" y="432.71" width="3" height="1.1" fill="#9cdcfe"/><rect x="733.9" y="432.71" width="2.9000000000000004" height="1.1" fill="#9cdcfe"/><rect x="738.8" y="432.71" width="4" height="1.1" fill="#ce9178"/><rect x="726.5" y="434.38" width="1.2" height="1.1" fill="#ffd700"/><rect x="726.5" y="437.72" width="4" height="1.1" fill="#d7ba7d"/><rect x="732.5" y="437.72" width="1.2" height="1.1" fill="#ffd700"/><rect x="729.8" y="439.39" width="4" height="1.1" fill="#9cdcfe"/><rect x="736.8" y="439.39" width="8" height="1.1" fill="#ce9178"/><rect x="745.9" y="439.39" width="0.9000000000000004" height="1.1" fill="#ce9178"/><rect x="729.8" y="441.06" width="7" height="1.1" fill="#9cdcfe"/><rect x="737.9" y="441.06" width="2.9000000000000004" height="1.1" fill="#9cdcfe"/><rect x="742.8" y="441.06" width="3" height="1.1" fill="#b5cea8"/><rect x="729.8" y="442.73" width="5" height="1.1" fill="#9cdcfe"/><rect x="735.9" y="442.73" width="3.9000000000000004" height="1.1" fill="#9cdcfe"/><rect x="741.8" y="442.73" width="3" height="1.1" fill="#ce9178"/><rect x="729.8" y="444.40" width="5" height="1.1" fill="#9cdcfe"/><rect x="736.8" y="444.40" width="9" height="1.1" fill="#b5cea8"/><rect x="746.9" y="444.40" width="1.9000000000000004" height="1.1" fill="#b5cea8"/><rect x="729.8" y="446.07" width="8" height="1.1" fill="#9cdcfe"/><rect x="738.9" y="446.07" width="1.9000000000000004" height="1.1" fill="#9cdcfe"/><rect x="742.8" y="446.07" width="5" height="1.1" fill="#b5cea8"/><rect x="729.8" y="447.74" width="5" height="1.1" fill="#9cdcfe"/><rect x="735.9" y="447.74" width="5" height="1.1" fill="#9cdcfe"/><rect x="743.8" y="447.74" width="8" height="1.1" fill="#ce9178"/><rect x="726.5" y="449.41" width="1.2" height="1.1" fill="#ffd700"/><rect x="726.5" y="452.75" width="6" height="1.1" fill="#d7ba7d"/><rect x="734.5" y="452.75" width="1.2" height="1.1" fill="#ffd700"/><rect x="729.8" y="454.42" width="8" height="1.1" fill="#9cdcfe"/><rect x="738.9" y="454.42" width="3.9000000000000004" height="1.1" fill="#9cdcfe"/><rect x="744.8" y="454.42" width="3" height="1.1" fill="#ce9178"/><rect x="729.8" y="456.09" width="9" height="1.1" fill="#9cdcfe"/><rect x="741.8" y="456.09" width="2" height="1.1" fill="#ce9178"/><rect x="729.8" y="457.76" width="3" height="1.1" fill="#9cdcfe"/><rect x="733.9" y="457.76" width="7" height="1.1" fill="#9cdcfe"/><rect x="742.0" y="457.76" width="0.8000000000000007" height="1.1" fill="#9cdcfe"/><rect x="744.8" y="457.76" width="6" height="1.1" fill="#ce9178"/><rect x="751.9" y="457.76" width="4.9" height="1.1" fill="#ce9178"/><rect x="729.8" y="459.43" width="7" height="1.1" fill="#9cdcfe"/><rect x="738.8" y="459.43" width="5" height="1.1" fill="#b5cea8"/><rect x="729.8" y="461.10" width="4" height="1.1" fill="#9cdcfe"/><rect x="734.9" y="461.10" width="1.9000000000000004" height="1.1" fill="#9cdcfe"/><rect x="738.8" y="461.10" width="5" height="1.1" fill="#ce9178"/><rect x="744.9" y="461.10" width="0.9000000000000004" height="1.1" fill="#ce9178"/><rect x="726.5" y="462.77" width="1.2" height="1.1" fill="#ffd700"/><rect x="726.5" y="466.11" width="5" height="1.1" fill="#d7ba7d"/><rect x="732.6" y="466.11" width="5.9" height="1.1" fill="#d7ba7d"/><rect x="739.5" y="466.11" width="1.2" height="1.1" fill="#ffd700"/><rect x="729.8" y="467.78" width="4" height="1.1" fill="#9cdcfe"/><rect x="734.9" y="467.78" width="3.9000000000000004" height="1.1" fill="#9cdcfe"/><rect x="740.8" y="467.78" width="9" height="1.1" fill="#ce9178"/><rect x="750.9" y="467.78" width="1.9000000000000004" height="1.1" fill="#ce9178"/><rect x="726.5" y="469.45" width="1.2" height="1.1" fill="#ffd700"/><rect x="726.5" y="472.79" width="5" height="1.1" fill="#d7ba7d"/><rect x="732.5" y="472.79" width="1.2" height="1.1" fill="#ffd700"/><rect x="729.8" y="474.46" width="3" height="1.1" fill="#9cdcfe"/><rect x="733.9" y="474.46" width="0.9000000000000004" height="1.1" fill="#9cdcfe"/><rect x="736.8" y="474.46" width="7" height="1.1" fill="#ce9178"/><rect x="729.8" y="476.13" width="8" height="1.1" fill="#9cdcfe"/><rect x="739.8" y="476.13" width="4" height="1.1" fill="#b5cea8"/><rect x="744.9" y="476.13" width="5.9" height="1.1" fill="#b5cea8"/><rect x="729.8" y="477.80" width="6" height="1.1" fill="#9cdcfe"/><rect x="738.8" y="477.80" width="6" height="1.1" fill="#ce9178"/><rect x="729.8" y="479.47" width="6" height="1.1" fill="#9cdcfe"/><rect x="736.9" y="479.47" width="5.9" height="1.1" fill="#9cdcfe"/><rect x="744.8" y="479.47" width="5" height="1.1" fill="#ce9178"/><rect x="750.9" y="479.47" width="3.9000000000000004" height="1.1" fill="#ce9178"/><rect x="729.8" y="481.14" width="6" height="1.1" fill="#9cdcfe"/><rect x="736.9" y="481.14" width="5.9" height="1.1" fill="#9cdcfe"/><rect x="744.8" y="481.14" width="3" height="1.1" fill="#ce9178"/><rect x="726.5" y="482.81" width="1.2" height="1.1" fill="#ffd700"/><rect x="726.5" y="486.15" width="7" height="1.1" fill="#d7ba7d"/><rect x="734.5" y="486.15" width="1.2" height="1.1" fill="#ffd700"/><rect x="729.8" y="487.82" width="9" height="1.1" fill="#9cdcfe"/><rect x="739.9" y="487.82" width="2.9000000000000004" height="1.1" fill="#9cdcfe"/><rect x="744.8" y="487.82" width="8" height="1.1" fill="#ce9178"/><rect x="753.9" y="487.82" width="0.9000000000000004" height="1.1" fill="#ce9178"/><rect x="729.8" y="489.49" width="5" height="1.1" fill="#9cdcfe"/><rect x="736.8" y="489.49" width="8" height="1.1" fill="#ce9178"/><rect x="729.8" y="491.16" width="9" height="1.1" fill="#9cdcfe"/><rect x="739.9" y="491.16" width="0.9000000000000004" height="1.1" fill="#9cdcfe"/><rect x="742.8" y="491.16" width="4" height="1.1" fill="#ce9178"/><rect x="747.9" y="491.16" width="5" height="1.1" fill="#ce9178"/><rect x="729.8" y="492.83" width="8" height="1.1" fill="#9cdcfe"/><rect x="738.9" y="492.83" width="3.9000000000000004" height="1.1" fill="#9cdcfe"/><rect x="744.8" y="492.83" width="4" height="1.1" fill="#ce9178"/><rect x="726.5" y="494.50" width="1.2" height="1.1" fill="#ffd700"/><rect x="726.5" y="497.84" width="3" height="1.1" fill="#d7ba7d"/><rect x="730.6" y="497.84" width="4" height="1.1" fill="#d7ba7d"/><rect x="735.7" y="497.84" width="5.800000000000001" height="1.1" fill="#d7ba7d"/><rect x="742.5" y="497.84" width="1.2" height="1.1" fill="#ffd700"/><rect x="729.8" y="499.51" width="5" height="1.1" fill="#9cdcfe"/><rect x="736.8" y="499.51" width="5" height="1.1" fill="#ce9178"/><rect x="729.8" y="501.18" width="5" height="1.1" fill="#9cdcfe"/><rect x="735.9" y="501.18" width="0.9000000000000004" height="1.1" fill="#9cdcfe"/><rect x="738.8" y="501.18" width="3" height="1.1" fill="#b5cea8"/><rect x="726.5" y="502.85" width="1.2" height="1.1" fill="#ffd700"/><rect x="726.5" y="506.19" width="8" height="1.1" fill="#d7ba7d"/><rect x="735.6" y="506.19" width="2.9000000000000004" height="1.1" fill="#d7ba7d"/><rect x="739.5" y="506.19" width="1.2" height="1.1" fill="#ffd700"/><rect x="729.8" y="507.86" width="9" height="1.1" fill="#9cdcfe"/><rect x="739.9" y="507.86" width="3.9000000000000004" height="1.1" fill="#9cdcfe"/><rect x="745.8" y="507.86" width="6" height="1.1" fill="#ce9178"/><rect x="752.9" y="507.86" width="2.9000000000000004" height="1.1" fill="#ce9178"/><rect x="726.5" y="509.53" width="1.2" height="1.1" fill="#ffd700"/><rect x="726.5" y="512.87" width="3" height="1.1" fill="#d7ba7d"/><rect x="730.6" y="512.87" width="9" height="1.1" fill="#d7ba7d"/><rect x="740.7" y="512.87" width="5.800000000000001" height="1.1" fill="#d7ba7d"/><rect x="747.5" y="512.87" width="1.2" height="1.1" fill="#ffd700"/><rect x="729.8" y="514.54" width="7" height="1.1" fill="#9cdcfe"/><rect x="739.8" y="514.54" width="2" height="1.1" fill="#ce9178"/><rect x="729.8" y="516.21" width="5" height="1.1" fill="#9cdcfe"/><rect x="735.9" y="516.21" width="2.9000000000000004" height="1.1" fill="#9cdcfe"/><rect x="740.8" y="516.21" width="8" height="1.1" fill="#ce9178"/><rect x="749.9" y="516.21" width="8" height="1.1" fill="#ce9178"/><rect x="759.0" y="516.21" width="3" height="1.1" fill="#ce9178"/><rect x="763.1" y="516.21" width="5" height="1.1" fill="#ce9178"/><rect x="769.2" y="516.21" width="0.5999999999999996" height="1.1" fill="#ce9178"/><rect x="729.8" y="517.88" width="7" height="1.1" fill="#9cdcfe"/><rect x="738.8" y="517.88" width="3" height="1.1" fill="#ce9178"/><rect x="729.8" y="519.55" width="6" height="1.1" fill="#9cdcfe"/><rect x="737.8" y="519.55" width="8" height="1.1" fill="#b5cea8"/><rect x="746.9" y="519.55" width="6" height="1.1" fill="#b5cea8"/><rect x="754.0" y="519.55" width="4" height="1.1" fill="#b5cea8"/><rect x="759.1" y="519.55" width="5" height="1.1" fill="#b5cea8"/><rect x="765.2" y="519.55" width="4.6" height="1.1" fill="#b5cea8"/><rect x="729.8" y="521.22" width="6" height="1.1" fill="#9cdcfe"/><rect x="737.8" y="521.22" width="4" height="1.1" fill="#b5cea8"/><rect x="742.9" y="521.22" width="5" height="1.1" fill="#b5cea8"/><rect x="749.0" y="521.22" width="8" height="1.1" fill="#b5cea8"/><rect x="758.1" y="521.22" width="5.699999999999999" height="1.1" fill="#b5cea8"/><rect x="726.5" y="522.89" width="1.2" height="1.1" fill="#ffd700"/><rect x="726.5" y="526.23" width="8" height="1.1" fill="#d7ba7d"/><rect x="735.6" y="526.23" width="5" height="1.1" fill="#d7ba7d"/><rect x="742.5" y="526.23" width="1.2" height="1.1" fill="#ffd700"/><rect x="729.8" y="527.90" width="8" height="1.1" fill="#9cdcfe"/><rect x="738.9" y="527.90" width="1.9000000000000004" height="1.1" fill="#9cdcfe"/><rect x="742.8" y="527.90" width="6" height="1.1" fill="#ce9178"/><rect x="749.9" y="527.90" width="2.9000000000000004" height="1.1" fill="#ce9178"/><rect x="729.8" y="529.57" width="5" height="1.1" fill="#9cdcfe"/><rect x="737.8" y="529.57" width="6" height="1.1" fill="#b5cea8"/><rect x="729.8" y="531.24" width="9" height="1.1" fill="#9cdcfe"/><rect x="741.8" y="531.24" width="4" height="1.1" fill="#ce9178"/><rect x="746.9" y="531.24" width="3.9000000000000004" height="1.1" fill="#ce9178"/><rect x="726.5" y="532.91" width="1.2" height="1.1" fill="#ffd700"/><rect x="726.5" y="536.25" width="4" height="1.1" fill="#d7ba7d"/><rect x="732.5" y="536.25" width="1.2" height="1.1" fill="#ffd700"/><rect x="729.8" y="537.92" width="6" height="1.1" fill="#9cdcfe"/><rect x="738.8" y="537.92" width="8" height="1.1" fill="#b5cea8"/><rect x="747.9" y="537.92" width="3" height="1.1" fill="#b5cea8"/><rect x="752.0" y="537.92" width="3" height="1.1" fill="#b5cea8"/><rect x="756.1" y="537.92" width="4" height="1.1" fill="#b5cea8"/><rect x="761.2" y="537.92" width="3" height="1.1" fill="#b5cea8"/><rect x="765.3" y="537.92" width="4" height="1.1" fill="#b5cea8"/><rect x="770.4" y="537.92" width="2.399999999999997" height="1.1" fill="#b5cea8"/><rect x="729.8" y="539.59" width="9" height="1.1" fill="#9cdcfe"/><rect x="739.9" y="539.59" width="0.9000000000000004" height="1.1" fill="#9cdcfe"/><rect x="742.8" y="539.59" width="7" height="1.1" fill="#ce9178"/><rect x="726.5" y="541.26" width="1.2" height="1.1" fill="#ffd700"/><rect x="726.5" y="544.60" width="7" height="1.1" fill="#d7ba7d"/><rect x="734.5" y="544.60" width="1.2" height="1.1" fill="#ffd700"/><rect x="729.8" y="546.27" width="6" height="1.1" fill="#9cdcfe"/><rect x="738.8" y="546.27" width="7" height="1.1" fill="#ce9178"/><rect x="729.8" y="547.94" width="5" height="1.1" fill="#9cdcfe"/><rect x="736.8" y="547.94" width="8" height="1.1" fill="#ce9178"/><rect x="726.5" y="549.61" width="1.2" height="1.1" fill="#ffd700"/><rect x="726.5" y="552.95" width="7" height="1.1" fill="#d7ba7d"/><rect x="734.6" y="552.95" width="3" height="1.1" fill="#d7ba7d"/><rect x="738.7" y="552.95" width="2.8000000000000007" height="1.1" fill="#d7ba7d"/><rect x="742.5" y="552.95" width="1.2" height="1.1" fill="#ffd700"/><rect x="729.8" y="554.62" width="5" height="1.1" fill="#9cdcfe"/><rect x="735.9" y="554.62" width="1.9000000000000004" height="1.1" fill="#9cdcfe"/><rect x="739.8" y="554.62" width="6" height="1.1" fill="#b5cea8"/><rect x="729.8" y="556.29" width="5" height="1.1" fill="#9cdcfe"/><rect x="735.9" y="556.29" width="1.9000000000000004" height="1.1" fill="#9cdcfe"/><rect x="739.8" y="556.29" width="7" height="1.1" fill="#ce9178"/><rect x="747.9" y="556.29" width="1.9000000000000004" height="1.1" fill="#ce9178"/><rect x="729.8" y="557.96" width="7" height="1.1" fill="#9cdcfe"/><rect x="738.8" y="557.96" width="6" height="1.1" fill="#ce9178"/><rect x="726.5" y="559.63" width="1.2" height="1.1" fill="#ffd700"/><rect x="726.5" y="562.97" width="5" height="1.1" fill="#d7ba7d"/><rect x="732.6" y="562.97" width="0.9000000000000004" height="1.1" fill="#d7ba7d"/><rect x="734.5" y="562.97" width="1.2" height="1.1" fill="#ffd700"/><rect x="729.8" y="564.64" width="7" height="1.1" fill="#9cdcfe"/><rect x="737.9" y="564.64" width="4.9" height="1.1" fill="#9cdcfe"/><rect x="744.8" y="564.64" width="4" height="1.1" fill="#b5cea8"/><rect x="729.8" y="566.31" width="3" height="1.1" fill="#9cdcfe"/><rect x="733.9" y="566.31" width="3.9000000000000004" height="1.1" fill="#9cdcfe"/><rect x="739.8" y="566.31" width="4" height="1.1" fill="#ce9178"/><rect x="744.9" y="566.31" width="4" height="1.1" fill="#ce9178"/><rect x="750.0" y="566.31" width="0.8000000000000007" height="1.1" fill="#ce9178"/><rect x="729.8" y="567.98" width="8" height="1.1" fill="#9cdcfe"/><rect x="738.9" y="567.98" width="4.9" height="1.1" fill="#9cdcfe"/><rect x="745.8" y="567.98" width="5" height="1.1" fill="#ce9178"/><rect x="751.9" y="567.98" width="1.9000000000000004" height="1.1" fill="#ce9178"/><rect x="729.8" y="569.65" width="6" height="1.1" fill="#9cdcfe"/><rect x="737.8" y="569.65" width="7" height="1.1" fill="#b5cea8"/><rect x="745.9" y="569.65" width="0.9000000000000004" height="1.1" fill="#b5cea8"/><rect x="729.8" y="571.32" width="7" height="1.1" fill="#9cdcfe"/><rect x="737.9" y="571.32" width="4.9" height="1.1" fill="#9cdcfe"/><rect x="744.8" y="571.32" width="3" height="1.1" fill="#b5cea8"/><rect x="729.8" y="572.99" width="4" height="1.1" fill="#9cdcfe"/><rect x="734.9" y="572.99" width="3" height="1.1" fill="#9cdcfe"/><rect x="739.0" y="572.99" width="0.8000000000000007" height="1.1" fill="#9cdcfe"/><rect x="741.8" y="572.99" width="9" height="1.1" fill="#ce9178"/><rect x="751.9" y="572.99" width="7" height="1.1" fill="#ce9178"/><rect x="760.0" y="572.99" width="5" height="1.1" fill="#ce9178"/><rect x="766.1" y="572.99" width="6.699999999999999" height="1.1" fill="#ce9178"/><rect x="726.5" y="574.66" width="1.2" height="1.1" fill="#ffd700"/><rect x="726.5" y="578.00" width="4" height="1.1" fill="#d7ba7d"/><rect x="731.6" y="578.00" width="1.9000000000000004" height="1.1" fill="#d7ba7d"/><rect x="734.5" y="578.00" width="1.2" height="1.1" fill="#ffd700"/><rect x="729.8" y="579.67" width="3" height="1.1" fill="#9cdcfe"/><rect x="733.9" y="579.67" width="1.9000000000000004" height="1.1" fill="#9cdcfe"/><rect x="737.8" y="579.67" width="4" height="1.1" fill="#b5cea8"/><rect x="742.9" y="579.67" width="3.9000000000000004" height="1.1" fill="#b5cea8"/><rect x="729.8" y="581.34" width="7" height="1.1" fill="#9cdcfe"/><rect x="737.9" y="581.34" width="2.9000000000000004" height="1.1" fill="#9cdcfe"/><rect x="742.8" y="581.34" width="4" height="1.1" fill="#ce9178"/><rect x="747.9" y="581.34" width="4" height="1.1" fill="#ce9178"/><rect x="753.0" y="581.34" width="0.8000000000000007" height="1.1" fill="#ce9178"/><rect x="729.8" y="583.01" width="4" height="1.1" fill="#9cdcfe"/><rect x="734.9" y="583.01" width="6.9" height="1.1" fill="#9cdcfe"/><rect x="743.8" y="583.01" width="2" height="1.1" fill="#b5cea8"/><rect x="729.8" y="584.68" width="7" height="1.1" fill="#9cdcfe"/><rect x="738.8" y="584.68" width="7" height="1.1" fill="#ce9178"/><rect x="729.8" y="586.35" width="8" height="1.1" fill="#9cdcfe"/><rect x="738.9" y="586.35" width="0.9000000000000004" height="1.1" fill="#9cdcfe"/><rect x="741.8" y="586.35" width="6" height="1.1" fill="#ce9178"/><rect x="748.9" y="586.35" width="7" height="1.1" fill="#ce9178"/><rect x="757.0" y="586.35" width="3" height="1.1" fill="#ce9178"/><rect x="761.1" y="586.35" width="4.699999999999999" height="1.1" fill="#ce9178"/><rect x="729.8" y="588.02" width="7" height="1.1" fill="#9cdcfe"/><rect x="737.9" y="588.02" width="1.9000000000000004" height="1.1" fill="#9cdcfe"/><rect x="741.8" y="588.02" width="8" height="1.1" fill="#ce9178"/><rect x="726.5" y="589.69" width="1.2" height="1.1" fill="#ffd700"/><rect x="726.5" y="593.03" width="6" height="1.1" fill="#d7ba7d"/><rect x="733.6" y="593.03" width="1.9000000000000004" height="1.1" fill="#d7ba7d"/><rect x="736.5" y="593.03" width="1.2" height="1.1" fill="#ffd700"/><rect x="729.8" y="594.70" width="7" height="1.1" fill="#9cdcfe"/><rect x="737.9" y="594.70" width="2.9000000000000004" height="1.1" fill="#9cdcfe"/><rect x="742.8" y="594.70" width="3" height="1.1" fill="#b5cea8"/><rect x="729.8" y="596.37" width="6" height="1.1" fill="#9cdcfe"/><rect x="736.9" y="596.37" width="5.9" height="1.1" fill="#9cdcfe"/><rect x="744.8" y="596.37" width="3" height="1.1" fill="#ce9178"/><rect x="748.9" y="596.37" width="5" height="1.1" fill="#ce9178"/><rect x="729.8" y="598.04" width="8" height="1.1" fill="#9cdcfe"/><rect x="738.9" y="598.04" width="4.9" height="1.1" fill="#9cdcfe"/><rect x="745.8" y="598.04" width="7" height="1.1" fill="#ce9178"/><rect x="729.8" y="599.71" width="3" height="1.1" fill="#9cdcfe"/><rect x="733.9" y="599.71" width="1.9000000000000004" height="1.1" fill="#9cdcfe"/><rect x="737.8" y="599.71" width="5" height="1.1" fill="#b5cea8"/><rect x="726.5" y="601.38" width="1.2" height="1.1" fill="#ffd700"/><rect x="726.5" y="604.72" width="3" height="1.1" fill="#d7ba7d"/><rect x="730.6" y="604.72" width="6" height="1.1" fill="#d7ba7d"/><rect x="737.7" y="604.72" width="0.8000000000000007" height="1.1" fill="#d7ba7d"/><rect x="739.5" y="604.72" width="1.2" height="1.1" fill="#ffd700"/><rect x="729.8" y="606.39" width="7" height="1.1" fill="#9cdcfe"/><rect x="737.9" y="606.39" width="4.9" height="1.1" fill="#9cdcfe"/><rect x="744.8" y="606.39" width="3" height="1.1" fill="#ce9178"/><rect x="748.9" y="606.39" width="0.9000000000000004" height="1.1" fill="#ce9178"/><rect x="726.5" y="608.06" width="1.2" height="1.1" fill="#ffd700"/><rect x="726.5" y="611.40" width="5" height="1.1" fill="#d7ba7d"/><rect x="732.6" y="611.40" width="9" height="1.1" fill="#d7ba7d"/><rect x="742.7" y="611.40" width="3.8000000000000007" height="1.1" fill="#d7ba7d"/><rect x="747.5" y="611.40" width="1.2" height="1.1" fill="#ffd700"/><rect x="729.8" y="613.07" width="4" height="1.1" fill="#9cdcfe"/><rect x="734.9" y="613.07" width="8" height="1.1" fill="#9cdcfe"/><rect x="745.8" y="613.07" width="3" height="1.1" fill="#b5cea8"/><rect x="729.8" y="614.74" width="6" height="1.1" fill="#9cdcfe"/><rect x="737.8" y="614.74" width="3" height="1.1" fill="#ce9178"/><rect x="729.8" y="616.41" width="3" height="1.1" fill="#9cdcfe"/><rect x="733.9" y="616.41" width="5" height="1.1" fill="#9cdcfe"/><rect x="740.0" y="616.41" width="3.8000000000000007" height="1.1" fill="#9cdcfe"/><rect x="745.8" y="616.41" width="5" height="1.1" fill="#ce9178"/><rect x="751.9" y="616.41" width="2.9000000000000004" height="1.1" fill="#ce9178"/><rect x="729.8" y="618.08" width="6" height="1.1" fill="#9cdcfe"/><rect x="737.8" y="618.08" width="4" height="1.1" fill="#ce9178"/><rect x="742.9" y="618.08" width="3.9000000000000004" height="1.1" fill="#ce9178"/><rect x="726.5" y="619.75" width="1.2" height="1.1" fill="#ffd700"/><rect x="726.5" y="623.09" width="7" height="1.1" fill="#d7ba7d"/><rect x="734.6" y="623.09" width="4" height="1.1" fill="#d7ba7d"/><rect x="739.7" y="623.09" width="3" height="1.1" fill="#d7ba7d"/><rect x="743.8" y="623.09" width="2.700000000000001" height="1.1" fill="#d7ba7d"/><rect x="747.5" y="623.09" width="1.2" height="1.1" fill="#ffd700"/><rect x="729.8" y="624.76" width="5" height="1.1" fill="#9cdcfe"/><rect x="735.9" y="624.76" width="5" height="1.1" fill="#9cdcfe"/><rect x="743.8" y="624.76" width="4" height="1.1" fill="#ce9178"/><rect x="748.9" y="624.76" width="1.9000000000000004" height="1.1" fill="#ce9178"/><rect x="726.5" y="626.43" width="1.2" height="1.1" fill="#ffd700"/><rect x="726.5" y="629.77" width="9" height="1.1" fill="#d7ba7d"/><rect x="736.5" y="629.77" width="1.2" height="1.1" fill="#ffd700"/><rect x="729.8" y="631.44" width="8" height="1.1" fill="#9cdcfe"/><rect x="739.8" y="631.44" width="3" height="1.1" fill="#ce9178"/><rect x="743.9" y="631.44" width="2.9000000000000004" height="1.1" fill="#ce9178"/><rect x="726.5" y="633.11" width="1.2" height="1.1" fill="#ffd700"/><rect x="726.5" y="636.45" width="8" height="1.1" fill="#d7ba7d"/><rect x="735.6" y="636.45" width="7" height="1.1" fill="#d7ba7d"/><rect x="743.7" y="636.45" width="2.8000000000000007" height="1.1" fill="#d7ba7d"/><rect x="747.5" y="636.45" width="1.2" height="1.1" fill="#ffd700"/><rect x="729.8" y="638.12" width="3" height="1.1" fill="#9cdcfe"/><rect x="733.9" y="638.12" width="3.9000000000000004" height="1.1" fill="#9cdcfe"/><rect x="739.8" y="638.12" width="5" height="1.1" fill="#b5cea8"/><rect x="729.8" y="639.79" width="9" height="1.1" fill="#9cdcfe"/><rect x="741.8" y="639.79" width="5" height="1.1" fill="#ce9178"/><rect x="729.8" y="641.46" width="3" height="1.1" fill="#9cdcfe"/><rect x="733.9" y="641.46" width="4" height="1.1" fill="#9cdcfe"/><rect x="739.0" y="641.46" width="2.8000000000000007" height="1.1" fill="#9cdcfe"/><rect x="743.8" y="641.46" width="8" height="1.1" fill="#ce9178"/><rect x="729.8" y="643.13" width="4" height="1.1" fill="#9cdcfe"/><rect x="734.9" y="643.13" width="2.9000000000000004" height="1.1" fill="#9cdcfe"/><rect x="739.8" y="643.13" width="5" height="1.1" fill="#b5cea8"/><rect x="729.8" y="644.80" width="9" height="1.1" fill="#9cdcfe"/><rect x="740.8" y="644.80" width="7" height="1.1" fill="#ce9178"/><rect x="729.8" y="646.47" width="5" height="1.1" fill="#9cdcfe"/><rect x="735.9" y="646.47" width="4" height="1.1" fill="#9cdcfe"/><rect x="741.0" y="646.47" width="1.8000000000000007" height="1.1" fill="#9cdcfe"/><rect x="744.8" y="646.47" width="5" height="1.1" fill="#ce9178"/><rect x="726.5" y="648.14" width="1.2" height="1.1" fill="#ffd700"/><rect x="726.5" y="651.48" width="3" height="1.1" fill="#d7ba7d"/><rect x="730.6" y="651.48" width="6" height="1.1" fill="#d7ba7d"/><rect x="737.7" y="651.48" width="3" height="1.1" fill="#d7ba7d"/><rect x="741.8" y="651.48" width="4.700000000000001" height="1.1" fill="#d7ba7d"/><rect x="747.5" y="651.48" width="1.2" height="1.1" fill="#ffd700"/><rect x="729.8" y="653.15" width="3" height="1.1" fill="#9cdcfe"/><rect x="733.9" y="653.15" width="1.9000000000000004" height="1.1" fill="#9cdcfe"/><rect x="737.8" y="653.15" width="7" height="1.1" fill="#ce9178"/><rect x="745.9" y="653.15" width="1.9000000000000004" height="1.1" fill="#ce9178"/><rect x="729.8" y="654.82" width="3" height="1.1" fill="#9cdcfe"/><rect x="733.9" y="654.82" width="4" height="1.1" fill="#9cdcfe"/><rect x="739.0" y="654.82" width="1.8000000000000007" height="1.1" fill="#9cdcfe"/><rect x="742.8" y="654.82" width="4" height="1.1" fill="#ce9178"/><rect x="747.9" y="654.82" width="4" height="1.1" fill="#ce9178"/><rect x="753.0" y="654.82" width="0.8000000000000007" height="1.1" fill="#ce9178"/><rect x="729.8" y="656.49" width="4" height="1.1" fill="#9cdcfe"/><rect x="734.9" y="656.49" width="7.9" height="1.1" fill="#9cdcfe"/><rect x="744.8" y="656.49" width="2" height="1.1" fill="#ce9178"/><rect x="729.8" y="658.16" width="6" height="1.1" fill="#9cdcfe"/><rect x="736.9" y="658.16" width="3" height="1.1" fill="#9cdcfe"/><rect x="741.0" y="658.16" width="0.8000000000000007" height="1.1" fill="#9cdcfe"/><rect x="743.8" y="658.16" width="9" height="1.1" fill="#b5cea8"/><rect x="753.9" y="658.16" width="8" height="1.1" fill="#b5cea8"/><rect x="763.0" y="658.16" width="2.8000000000000007" height="1.1" fill="#b5cea8"/><rect x="729.8" y="659.83" width="6" height="1.1" fill="#9cdcfe"/><rect x="736.9" y="659.83" width="2.9000000000000004" height="1.1" fill="#9cdcfe"/><rect x="741.8" y="659.83" width="9" height="1.1" fill="#b5cea8"/><rect x="751.9" y="659.83" width="9" height="1.1" fill="#b5cea8"/><rect x="762.0" y="659.83" width="8" height="1.1" fill="#b5cea8"/><rect x="729.8" y="661.50" width="4" height="1.1" fill="#9cdcfe"/><rect x="734.9" y="661.50" width="7" height="1.1" fill="#9cdcfe"/><rect x="744.8" y="661.50" width="3" height="1.1" fill="#ce9178"/><rect x="748.9" y="661.50" width="5.9" height="1.1" fill="#ce9178"/><rect x="726.5" y="663.17" width="1.2" height="1.1" fill="#ffd700"/><rect x="726.5" y="666.51" width="4" height="1.1" fill="#d7ba7d"/><rect x="731.6" y="666.51" width="6.9" height="1.1" fill="#d7ba7d"/><rect x="739.5" y="666.51" width="1.2" height="1.1" fill="#ffd700"/><rect x="729.8" y="668.18" width="9" height="1.1" fill="#9cdcfe"/><rect x="739.9" y="668.18" width="2.9000000000000004" height="1.1" fill="#9cdcfe"/><rect x="744.8" y="668.18" width="5" height="1.1" fill="#ce9178"/><rect x="729.8" y="669.85" width="4" height="1.1" fill="#9cdcfe"/><rect x="734.9" y="669.85" width="6.9" height="1.1" fill="#9cdcfe"/><rect x="743.8" y="669.85" width="5" height="1.1" fill="#ce9178"/><rect x="749.9" y="669.85" width="3" height="1.1" fill="#ce9178"/><rect x="729.8" y="671.52" width="8" height="1.1" fill="#9cdcfe"/><rect x="739.8" y="671.52" width="5" height="1.1" fill="#ce9178"/><rect x="745.9" y="671.52" width="4" height="1.1" fill="#ce9178"/><rect x="751.0" y="671.52" width="7" height="1.1" fill="#ce9178"/><rect x="759.1" y="671.52" width="3" height="1.1" fill="#ce9178"/><rect x="763.2" y="671.52" width="7" height="1.1" fill="#ce9178"/><rect x="771.3" y="671.52" width="2.4999999999999982" height="1.1" fill="#ce9178"/><rect x="729.8" y="673.19" width="6" height="1.1" fill="#9cdcfe"/><rect x="736.9" y="673.19" width="3.9000000000000004" height="1.1" fill="#9cdcfe"/><rect x="742.8" y="673.19" width="3" height="1.1" fill="#ce9178"/><rect x="746.9" y="673.19" width="3" height="1.1" fill="#ce9178"/><rect x="751.0" y="673.19" width="1.8000000000000007" height="1.1" fill="#ce9178"/><rect x="729.8" y="674.86" width="7" height="1.1" fill="#9cdcfe"/><rect x="737.9" y="674.86" width="5.9" height="1.1" fill="#9cdcfe"/><rect x="745.8" y="674.86" width="7" height="1.1" fill="#ce9178"/><rect x="753.9" y="674.86" width="3.9000000000000004" height="1.1" fill="#ce9178"/><rect x="726.5" y="676.53" width="1.2" height="1.1" fill="#ffd700"/><rect x="726.5" y="679.87" width="5" height="1.1" fill="#d7ba7d"/><rect x="732.5" y="679.87" width="1.2" height="1.1" fill="#ffd700"/><rect x="729.8" y="681.54" width="5" height="1.1" fill="#9cdcfe"/><rect x="736.8" y="681.54" width="7" height="1.1" fill="#b5cea8"/><rect x="729.8" y="683.21" width="6" height="1.1" fill="#9cdcfe"/><rect x="736.9" y="683.21" width="1.9000000000000004" height="1.1" fill="#9cdcfe"/><rect x="740.8" y="683.21" width="4" height="1.1" fill="#b5cea8"/><rect x="745.9" y="683.21" width="5.9" height="1.1" fill="#b5cea8"/><rect x="729.8" y="684.88" width="4" height="1.1" fill="#9cdcfe"/><rect x="734.9" y="684.88" width="3.9000000000000004" height="1.1" fill="#9cdcfe"/><rect x="740.8" y="684.88" width="5" height="1.1" fill="#b5cea8"/><rect x="729.8" y="686.55" width="5" height="1.1" fill="#9cdcfe"/><rect x="735.9" y="686.55" width="5.9" height="1.1" fill="#9cdcfe"/><rect x="743.8" y="686.55" width="2" height="1.1" fill="#b5cea8"/><rect x="726.5" y="688.22" width="1.2" height="1.1" fill="#ffd700"/><rect x="726.5" y="691.56" width="3" height="1.1" fill="#d7ba7d"/><rect x="730.6" y="691.56" width="4" height="1.1" fill="#d7ba7d"/><rect x="735.7" y="691.56" width="6" height="1.1" fill="#d7ba7d"/><rect x="742.8" y="691.56" width="3.700000000000001" height="1.1" fill="#d7ba7d"/><rect x="747.5" y="691.56" width="1.2" height="1.1" fill="#ffd700"/><rect x="729.8" y="693.23" width="7" height="1.1" fill="#9cdcfe"/><rect x="738.8" y="693.23" width="3" height="1.1" fill="#ce9178"/><rect x="742.9" y="693.23" width="4" height="1.1" fill="#ce9178"/><rect x="729.8" y="694.90" width="4" height="1.1" fill="#9cdcfe"/><rect x="734.9" y="694.90" width="3" height="1.1" fill="#9cdcfe"/><rect x="739.0" y="694.90" width="1.8000000000000007" height="1.1" fill="#9cdcfe"/><rect x="742.8" y="694.90" width="6" height="1.1" fill="#ce9178"/><rect x="749.9" y="694.90" width="2.9000000000000004" height="1.1" fill="#ce9178"/><rect x="726.5" y="696.57" width="1.2" height="1.1" fill="#ffd700"/><rect x="726.5" y="699.91" width="5" height="1.1" fill="#d7ba7d"/><rect x="732.5" y="699.91" width="1.2" height="1.1" fill="#ffd700"/><rect x="729.8" y="701.58" width="3" height="1.1" fill="#9cdcfe"/><rect x="733.9" y="701.58" width="4.9" height="1.1" fill="#9cdcfe"/><rect x="740.8" y="701.58" width="6" height="1.1" fill="#ce9178"/><rect x="729.8" y="703.25" width="5" height="1.1" fill="#9cdcfe"/><rect x="737.8" y="703.25" width="4" height="1.1" fill="#b5cea8"/><rect x="726.5" y="704.92" width="1.2" height="1.1" fill="#ffd700"/><rect x="726.5" y="708.26" width="4" height="1.1" fill="#d7ba7d"/><rect x="732.5" y="708.26" width="1.2" height="1.1" fill="#ffd700"/><rect x="729.8" y="709.93" width="3" height="1.1" fill="#9cdcfe"/><rect x="733.9" y="709.93" width="8" height="1.1" fill="#9cdcfe"/><rect x="743.0" y="709.93" width="0.8000000000000007" height="1.1" fill="#9cdcfe"/><rect x="745.8" y="709.93" width="4" height="1.1" fill="#b5cea8"/><rect x="750.9" y="709.93" width="6" height="1.1" fill="#b5cea8"/><rect x="729.8" y="711.60" width="6" height="1.1" fill="#9cdcfe"/><rect x="736.9" y="711.60" width="3.9000000000000004" height="1.1" fill="#9cdcfe"/><rect x="742.8" y="711.60" width="5" height="1.1" fill="#ce9178"/><rect x="729.8" y="713.27" width="4" height="1.1" fill="#9cdcfe"/><rect x="734.9" y="713.27" width="4.9" height="1.1" fill="#9cdcfe"/><rect x="741.8" y="713.27" width="5" height="1.1" fill="#ce9178"/><rect x="729.8" y="714.94" width="4" height="1.1" fill="#9cdcfe"/><rect x="734.9" y="714.94" width="2.9000000000000004" height="1.1" fill="#9cdcfe"/><rect x="739.8" y="714.94" width="6" height="1.1" fill="#ce9178"/><rect x="746.9" y="714.94" width="0.9000000000000004" height="1.1" fill="#ce9178"/><rect x="726.5" y="716.61" width="1.2" height="1.1" fill="#ffd700"/><rect x="726.5" y="719.95" width="8" height="1.1" fill="#d7ba7d"/><rect x="735.6" y="719.95" width="2.9000000000000004" height="1.1" fill="#d7ba7d"/><rect x="739.5" y="719.95" width="1.2" height="1.1" fill="#ffd700"/><rect x="729.8" y="721.62" width="7" height="1.1" fill="#9cdcfe"/><rect x="737.9" y="721.62" width="3.9000000000000004" height="1.1" fill="#9cdcfe"/><rect x="743.8" y="721.62" width="5" height="1.1" fill="#ce9178"/><rect x="729.8" y="723.29" width="5" height="1.1" fill="#9cdcfe"/><rect x="735.9" y="723.29" width="2.9000000000000004" height="1.1" fill="#9cdcfe"/><rect x="740.8" y="723.29" width="5" height="1.1" fill="#b5cea8"/><rect x="746.9" y="723.29" width="7" height="1.1" fill="#b5cea8"/><rect x="755.0" y="723.29" width="6" height="1.1" fill="#b5cea8"/><rect x="762.1" y="723.29" width="3.6999999999999993" height="1.1" fill="#b5cea8"/><rect x="726.5" y="724.96" width="1.2" height="1.1" fill="#ffd700"/><rect x="726.5" y="728.30" width="8" height="1.1" fill="#d7ba7d"/><rect x="735.6" y="728.30" width="4" height="1.1" fill="#d7ba7d"/><rect x="740.7" y="728.30" width="5" height="1.1" fill="#d7ba7d"/><rect x="747.5" y="728.30" width="1.2" height="1.1" fill="#ffd700"/><rect x="729.8" y="729.97" width="4" height="1.1" fill="#9cdcfe"/><rect x="734.9" y="729.97" width="4.9" height="1.1" fill="#9cdcfe"/><rect x="741.8" y="729.97" width="2" height="1.1" fill="#ce9178"/><rect x="726.5" y="731.64" width="1.2" height="1.1" fill="#ffd700"/><rect x="726.5" y="734.98" width="7" height="1.1" fill="#d7ba7d"/><rect x="734.5" y="734.98" width="1.2" height="1.1" fill="#ffd700"/><rect x="729.8" y="736.65" width="5" height="1.1" fill="#9cdcfe"/><rect x="736.8" y="736.65" width="7" height="1.1" fill="#ce9178"/><rect x="726.5" y="738.32" width="1.2" height="1.1" fill="#ffd700"/><rect x="726.5" y="741.66" width="5" height="1.1" fill="#d7ba7d"/><rect x="732.6" y="741.66" width="5" height="1.1" fill="#d7ba7d"/><rect x="739.5" y="741.66" width="1.2" height="1.1" fill="#ffd700"/><rect x="729.8" y="743.33" width="5" height="1.1" fill="#9cdcfe"/><rect x="736.8" y="743.33" width="3" height="1.1" fill="#ce9178"/><rect x="740.9" y="743.33" width="1.9000000000000004" height="1.1" fill="#ce9178"/><rect x="729.8" y="745.00" width="7" height="1.1" fill="#9cdcfe"/><rect x="738.8" y="745.00" width="5" height="1.1" fill="#ce9178"/><rect x="744.9" y="745.00" width="3.9000000000000004" height="1.1" fill="#ce9178"/><rect x="729.8" y="746.67" width="7" height="1.1" fill="#9cdcfe"/><rect x="737.9" y="746.67" width="2.9000000000000004" height="1.1" fill="#9cdcfe"/><rect x="742.8" y="746.67" width="7" height="1.1" fill="#b5cea8"/><rect x="750.9" y="746.67" width="0.9000000000000004" height="1.1" fill="#b5cea8"/><rect x="729.8" y="748.34" width="8" height="1.1" fill="#9cdcfe"/><rect x="738.9" y="748.34" width="0.9000000000000004" height="1.1" fill="#9cdcfe"/><rect x="741.8" y="748.34" width="9" height="1.1" fill="#ce9178"/><rect x="729.8" y="750.01" width="8" height="1.1" fill="#9cdcfe"/><rect x="740.8" y="750.01" width="6" height="1.1" fill="#ce9178"/><rect x="747.9" y="750.01" width="2.9000000000000004" height="1.1" fill="#ce9178"/><rect x="729.8" y="751.68" width="3" height="1.1" fill="#9cdcfe"/><rect x="733.9" y="751.68" width="5" height="1.1" fill="#9cdcfe"/><rect x="741.8" y="751.68" width="4" height="1.1" fill="#b5cea8"/><rect x="726.5" y="753.35" width="1.2" height="1.1" fill="#ffd700"/><rect x="726.5" y="756.69" width="3" height="1.1" fill="#d7ba7d"/><rect x="730.6" y="756.69" width="2.9000000000000004" height="1.1" fill="#d7ba7d"/><rect x="734.5" y="756.69" width="1.2" height="1.1" fill="#ffd700"/><rect x="729.8" y="758.36" width="3" height="1.1" fill="#9cdcfe"/><rect x="733.9" y="758.36" width="7.9" height="1.1" fill="#9cdcfe"/><rect x="743.8" y="758.36" width="5" height="1.1" fill="#b5cea8"/><rect x="749.9" y="758.36" width="4.9" height="1.1" fill="#b5cea8"/><rect x="726.5" y="760.03" width="1.2" height="1.1" fill="#ffd700"/><rect x="726.5" y="763.37" width="3" height="1.1" fill="#d7ba7d"/><rect x="730.6" y="763.37" width="9" height="1.1" fill="#d7ba7d"/><rect x="740.7" y="763.37" width="4" height="1.1" fill="#d7ba7d"/><rect x="745.8" y="763.37" width="0.7000000000000011" height="1.1" fill="#d7ba7d"/><rect x="747.5" y="763.37" width="1.2" height="1.1" fill="#ffd700"/><rect x="729.8" y="765.04" width="4" height="1.1" fill="#9cdcfe"/><rect x="734.9" y="765.04" width="0.9000000000000004" height="1.1" fill="#9cdcfe"/><rect x="737.8" y="765.04" width="7" height="1.1" fill="#ce9178"/><rect x="729.8" y="766.71" width="6" height="1.1" fill="#9cdcfe"/><rect x="736.9" y="766.71" width="3.9000000000000004" height="1.1" fill="#9cdcfe"/><rect x="742.8" y="766.71" width="5" height="1.1" fill="#ce9178"/><rect x="748.9" y="766.71" width="6" height="1.1" fill="#ce9178"/><rect x="756.0" y="766.71" width="8" height="1.1" fill="#ce9178"/><rect x="765.1" y="766.71" width="5" height="1.1" fill="#ce9178"/><rect x="771.2" y="766.71" width="3.599999999999998" height="1.1" fill="#ce9178"/><rect x="729.8" y="768.38" width="4" height="1.1" fill="#9cdcfe"/><rect x="734.9" y="768.38" width="1.9000000000000004" height="1.1" fill="#9cdcfe"/><rect x="738.8" y="768.38" width="8" height="1.1" fill="#ce9178"/><rect x="726.5" y="770.05" width="1.2" height="1.1" fill="#ffd700"/><rect x="726.5" y="773.39" width="4" height="1.1" fill="#d7ba7d"/><rect x="731.6" y="773.39" width="7" height="1.1" fill="#d7ba7d"/><rect x="739.7" y="773.39" width="3" height="1.1" fill="#d7ba7d"/><rect x="743.8" y="773.39" width="2.700000000000001" height="1.1" fill="#d7ba7d"/><rect x="747.5" y="773.39" width="1.2" height="1.1" fill="#ffd700"/><rect x="729.8" y="775.06" width="6" height="1.1" fill="#9cdcfe"/><rect x="736.9" y="775.06" width="3.9000000000000004" height="1.1" fill="#9cdcfe"/><rect x="742.8" y="775.06" width="4" height="1.1" fill="#b5cea8"/><rect x="729.8" y="776.73" width="3" height="1.1" fill="#9cdcfe"/><rect x="733.9" y="776.73" width="0.9000000000000004" height="1.1" fill="#9cdcfe"/><rect x="736.8" y="776.73" width="5" height="1.1" fill="#ce9178"/><rect x="742.9" y="776.73" width="1.9000000000000004" height="1.1" fill="#ce9178"/><rect x="729.8" y="778.40" width="9" height="1.1" fill="#9cdcfe"/><rect x="739.9" y="778.40" width="0.9000000000000004" height="1.1" fill="#9cdcfe"/><rect x="742.8" y="778.40" width="5" height="1.1" fill="#b5cea8"/><rect x="748.9" y="778.40" width="2.9000000000000004" height="1.1" fill="#b5cea8"/><rect x="726.5" y="780.07" width="1.2" height="1.1" fill="#ffd700"/><rect x="726.5" y="783.41" width="3" height="1.1" fill="#d7ba7d"/><rect x="730.6" y="783.41" width="0.9000000000000004" height="1.1" fill="#d7ba7d"/><rect x="732.5" y="783.41" width="1.2" height="1.1" fill="#ffd700"/><rect x="729.8" y="785.08" width="7" height="1.1" fill="#9cdcfe"/><rect x="737.9" y="785.08" width="1.9000000000000004" height="1.1" fill="#9cdcfe"/><rect x="741.8" y="785.08" width="4" height="1.1" fill="#b5cea8"/><rect x="746.9" y="785.08" width="1.9000000000000004" height="1.1" fill="#b5cea8"/><rect x="729.8" y="786.75" width="7" height="1.1" fill="#9cdcfe"/><rect x="737.9" y="786.75" width="3.9000000000000004" height="1.1" fill="#9cdcfe"/><rect x="743.8" y="786.75" width="3" height="1.1" fill="#ce9178"/><rect x="747.9" y="786.75" width="3.9000000000000004" height="1.1" fill="#ce9178"/><rect x="729.8" y="788.42" width="8" height="1.1" fill="#9cdcfe"/><rect x="739.8" y="788.42" width="7" height="1.1" fill="#ce9178"/><rect x="747.9" y="788.42" width="6" height="1.1" fill="#ce9178"/><rect x="755.0" y="788.42" width="3" height="1.1" fill="#ce9178"/><rect x="759.1" y="788.42" width="5" height="1.1" fill="#ce9178"/><rect x="765.2" y="788.42" width="3" height="1.1" fill="#ce9178"/><rect x="769.3" y="788.42" width="7.4999999999999964" height="1.1" fill="#ce9178"/><rect x="726.5" y="790.09" width="1.2" height="1.1" fill="#ffd700"/><rect x="726.5" y="793.43" width="6" height="1.1" fill="#d7ba7d"/><rect x="733.6" y="793.43" width="4.9" height="1.1" fill="#d7ba7d"/><rect x="739.5" y="793.43" width="1.2" height="1.1" fill="#ffd700"/><rect x="729.8" y="795.10" width="5" height="1.1" fill="#9cdcfe"/><rect x="736.8" y="795.10" width="4" height="1.1" fill="#ce9178"/><rect x="729.8" y="796.77" width="3" height="1.1" fill="#9cdcfe"/><rect x="733.9" y="796.77" width="4" height="1.1" fill="#9cdcfe"/><rect x="739.0" y="796.77" width="0.8000000000000007" height="1.1" fill="#9cdcfe"/><rect x="741.8" y="796.77" width="5" height="1.1" fill="#ce9178"/><rect x="747.9" y="796.77" width="2.9000000000000004" height="1.1" fill="#ce9178"/><rect x="729.8" y="798.44" width="7" height="1.1" fill="#9cdcfe"/><rect x="739.8" y="798.44" width="3" height="1.1" fill="#ce9178"/><rect x="743.9" y="798.44" width="4" height="1.1" fill="#ce9178"/><rect x="749.0" y="798.44" width="7" height="1.1" fill="#ce9178"/><rect x="757.1" y="798.44" width="6" height="1.1" fill="#ce9178"/><rect x="764.2" y="798.44" width="9" height="1.1" fill="#ce9178"/><rect x="774.3" y="798.44" width="2.4999999999999964" height="1.1" fill="#ce9178"/><rect x="729.8" y="800.11" width="7" height="1.1" fill="#9cdcfe"/><rect x="737.9" y="800.11" width="4.9" height="1.1" fill="#9cdcfe"/><rect x="744.8" y="800.11" width="3" height="1.1" fill="#b5cea8"/><rect x="726.5" y="801.78" width="1.2" height="1.1" fill="#ffd700"/><rect x="726.5" y="805.12" width="5" height="1.1" fill="#d7ba7d"/><rect x="732.6" y="805.12" width="2.9000000000000004" height="1.1" fill="#d7ba7d"/><rect x="736.5" y="805.12" width="1.2" height="1.1" fill="#ffd700"/><rect x="729.8" y="806.79" width="5" height="1.1" fill="#9cdcfe"/><rect x="736.8" y="806.79" width="6" height="1.1" fill="#b5cea8"/><rect x="726.5" y="808.46" width="1.2" height="1.1" fill="#ffd700"/><rect x="726.5" y="811.80" width="4" height="1.1" fill="#d7ba7d"/><rect x="731.6" y="811.80" width="4" height="1.1" fill="#d7ba7d"/><rect x="736.7" y="811.80" width="9" height="1.1" fill="#d7ba7d"/><rect x="747.5" y="811.80" width="1.2" height="1.1" fill="#ffd700"/><rect x="729.8" y="813.47" width="7" height="1.1" fill="#9cdcfe"/><rect x="738.8" y="813.47" width="5" height="1.1" fill="#b5cea8"/><rect x="744.9" y="813.47" width="0.9000000000000004" height="1.1" fill="#b5cea8"/><rect x="729.8" y="815.14" width="5" height="1.1" fill="#9cdcfe"/><rect x="735.9" y="815.14" width="4.9" height="1.1" fill="#9cdcfe"/><rect x="742.8" y="815.14" width="4" height="1.1" fill="#ce9178"/><rect x="747.9" y="815.14" width="0.9000000000000004" height="1.1" fill="#ce9178"/><rect x="726.5" y="816.81" width="1.2" height="1.1" fill="#ffd700"/><rect x="726.5" y="820.15" width="5" height="1.1" fill="#d7ba7d"/><rect x="732.6" y="820.15" width="0.9000000000000004" height="1.1" fill="#d7ba7d"/><rect x="734.5" y="820.15" width="1.2" height="1.1" fill="#ffd700"/><rect x="729.8" y="821.82" width="3" height="1.1" fill="#9cdcfe"/><rect x="733.9" y="821.82" width="3" height="1.1" fill="#9cdcfe"/><rect x="738.0" y="821.82" width="4.800000000000001" height="1.1" fill="#9cdcfe"/><rect x="744.8" y="821.82" width="4" height="1.1" fill="#b5cea8"/><rect x="729.8" y="823.49" width="6" height="1.1" fill="#9cdcfe"/><rect x="737.8" y="823.49" width="3" height="1.1" fill="#ce9178"/><rect x="741.9" y="823.49" width="4" height="1.1" fill="#ce9178"/><rect x="726.5" y="825.16" width="1.2" height="1.1" fill="#ffd700"/><rect x="726.5" y="828.50" width="9" height="1.1" fill="#d7ba7d"/><rect x="736.6" y="828.50" width="4.9" height="1.1" fill="#d7ba7d"/><rect x="742.5" y="828.50" width="1.2" height="1.1" fill="#ffd700"/><rect x="729.8" y="830.17" width="5" height="1.1" fill="#9cdcfe"/><rect x="736.8" y="830.17" width="7" height="1.1" fill="#b5cea8"/><rect x="729.8" y="831.84" width="8" height="1.1" fill="#9cdcfe"/><rect x="738.9" y="831.84" width="1.9000000000000004" height="1.1" fill="#9cdcfe"/><rect x="742.8" y="831.84" width="6" height="1.1" fill="#b5cea8"/><rect x="729.8" y="833.51" width="5" height="1.1" fill="#9cdcfe"/><rect x="735.9" y="833.51" width="3.9000000000000004" height="1.1" fill="#9cdcfe"/><rect x="741.8" y="833.51" width="4" height="1.1" fill="#b5cea8"/><rect x="729.8" y="835.18" width="6" height="1.1" fill="#9cdcfe"/><rect x="738.8" y="835.18" width="7" height="1.1" fill="#ce9178"/><rect x="746.9" y="835.18" width="2.9000000000000004" height="1.1" fill="#ce9178"/><rect x="729.8" y="836.85" width="4" height="1.1" fill="#9cdcfe"/><rect x="734.9" y="836.85" width="3.9000000000000004" height="1.1" fill="#9cdcfe"/><rect x="740.8" y="836.85" width="4" height="1.1" fill="#b5cea8"/><rect x="726.5" y="838.52" width="1.2" height="1.1" fill="#ffd700"/></g></svg><div class="a" style="left:727px;top:325.5px;width:61px;height:2px;background:#2d70c2"></div><div class="a" style="left:727px;top:337px;width:61px;height:2px;background:#2d70c2"></div><div class="a" style="left:727px;top:748.5px;width:61px;height:2px;background:#2d70c2"></div><div class="a" style="left:727px;top:809px;width:61px;height:2px;background:#2d70c2"></div><div class="a" style="left:727px;top:820px;width:61px;height:2px;background:#2d70c2"></div><div class="a" style="left:727px;top:837px;width:61px;height:2px;background:#2d70c2"></div><div class="a" style="left:801px;top:1px;width:799px;height:60px;background:#282828"></div><div class="a" style="left:801px;top:33px;width:799px;height:39px;background:#3c3c3c;border-radius:8px 8px 0 0"></div><div class="a" style="left:801px;top:71px;width:799px;height:1px;background:#1e1e1e"></div><div class="a" style="left:1009px;top:5px;width:195px;height:30px;background:#3c3c3c;border-radius:8px 8px 0 0"></div><svg class="a" style="left:1001px;top:25px" width="8" height="8" viewBox="0 0 8 8"><path d="M0 8 Q8 8 8 0 V8 Z" fill="#3c3c3c"/></svg><svg class="a" style="left:1204px;top:25px" width="8" height="8" viewBox="0 0 8 8"><path d="M8 8 Q0 8 0 0 V8 Z" fill="#3c3c3c"/></svg><svg class="a" style="left:818px;top:11px" width="12" height="12" viewBox="0 0 12 12"><circle cx="6" cy="6" r="5.5" fill="#a9b1ba"/><path d="M1.2 4.2C2.5 4 3.6 4.6 3.8 5.8 4 7 5.2 7.2 5.6 8.2 5.9 9 5.4 10 5.2 11.2 3 10.8 1.3 9 .8 6.8zM7 .7C7.4 1.8 8.6 2 9.4 2.6 10.2 3.2 9.6 4.3 8.8 4.6 8 5 8.4 6.2 9.4 6.4 10.3 6.6 11 6.2 11.4 5.8 11.2 3.2 9.4 1.2 7 .7z" fill="#3c3c3c"/></svg><div class="a fx" id="ff6063f74" style="left:837.32px;top:12.18px;white-space:nowrap;transform-origin:0 0;transform:scaleX(0.9733);font-size:10px;line-height:11.50px;color:#e3e3e3">Max&#39;s Laser Prints</div><svg class="a" style="left:987px;top:13px" width="9" height="9" viewBox="0 0 9 9"><path d="M1 1L8 8M8 1L1 8" stroke="#e0e0e0" stroke-width="1.3"/></svg><svg class="a" style="left:1017px;top:11px" width="12" height="12" viewBox="0 0 12 12"><circle cx="6" cy="6" r="5.5" fill="#a9b1ba"/><path d="M1.2 4.2C2.5 4 3.6 4.6 3.8 5.8 4 7 5.2 7.2 5.6 8.2 5.9 9 5.4 10 5.2 11.2 3 10.8 1.3 9 .8 6.8zM7 .7C7.4 1.8 8.6 2 9.4 2.6 10.2 3.2 9.6 4.3 8.8 4.6 8 5 8.4 6.2 9.4 6.4 10.3 6.6 11 6.2 11.4 5.8 11.2 3.2 9.4 1.2 7 .7z" fill="#3c3c3c"/></svg><div class="a fx" id="ff6063f74" style="left:1035.82px;top:12.18px;white-space:nowrap;transform-origin:0 0;transform:scaleX(0.9715);font-size:10px;line-height:11.50px;color:#e3e3e3">Max&#39;s Laser Prints</div><svg class="a" style="left:1186px;top:13px" width="9" height="9" viewBox="0 0 9 9"><path d="M1 1L8 8M8 1L1 8" stroke="#e0e0e0" stroke-width="1.3"/></svg><svg class="a" style="left:1214px;top:11px" width="11" height="11" viewBox="0 0 11 11"><path d="M5.5 0.5V10.5M0.5 5.5H10.5" stroke="#e0e0e0" stroke-width="1.2"/></svg><div class="a" style="left:1402px;top:5px;width:68px;height:23px;background:#3a3a3a;border-radius:11px"></div><svg class="a" style="left:1408px;top:10px" width="13" height="13" viewBox="0 0 13 13"><defs><linearGradient id="gg" x1="0" y1="0" x2="1" y2="1"><stop offset="0" stop-color="#f5a623"/><stop offset=".35" stop-color="#e94335"/><stop offset=".65" stop-color="#4285f4"/><stop offset="1" stop-color="#34a853"/></linearGradient></defs><path d="M6.5 0C6.9 3.4 9.6 6.1 13 6.5 9.6 6.9 6.9 9.6 6.5 13 6.1 9.6 3.4 6.9 0 6.5 3.4 6.1 6.1 3.4 6.5 0z" fill="url(#gg)"/></svg><div class="a fx" id="f910b3c7e" style="left:1423.86px;top:11.2px;white-space:nowrap;transform-origin:0 0;transform:scaleX(1.0536);font-size:10.2px;line-height:11.73px;font-weight:bold;color:#e3e3e3">Gemini</div><div class="a" style="left:1478px;top:10px;width:1px;height:13px;background:#5a5a5a"></div><div class="a" style="left:1500px;top:16px;width:9px;height:1px;background:#9a9a9a"></div><div class="a" style="left:1538px;top:12px;width:9px;height:9px;border:1px solid #9a9a9a;border-radius:1px"></div><svg class="a" style="left:1576px;top:12px" width="10" height="10" viewBox="0 0 10 10"><path d="M0.5 0.5L9.5 9.5M9.5 0.5L0.5 9.5" stroke="#9a9a9a" stroke-width="1"/></svg><svg class="a" style="left:813px;top:46px" width="13" height="13" viewBox="0 0 13 13"><path d="M12 6.5H1.8M6.5 1.8L1.8 6.5L6.5 11.2" stroke="#e3e3e3" stroke-width="1.3" fill="none"/></svg><svg class="a" style="left:843px;top:46px" width="13" height="13" viewBox="0 0 13 13"><path d="M1 6.5H11.2M6.5 1.8L11.2 6.5L6.5 11.2" stroke="#8a8a8a" stroke-width="1.3" fill="none"/></svg><svg class="a" style="left:873px;top:46px" width="13" height="13" viewBox="0 0 13 13"><path d="M10.8 7.2A4.6 4.6 0 1 1 9.3 3" stroke="#e3e3e3" stroke-width="1.3" fill="none"/><path d="M7.5 1.5H11V5z" fill="#e3e3e3" stroke="#e3e3e3" stroke-width=".8"/></svg><div class="a" style="left:902px;top:39px;width:538px;height:28px;background:#282828;border-radius:14px"></div><div class="a" style="left:906px;top:43px;width:42px;height:20px;background:#3c3c3c;border-radius:10px"></div><svg class="a" style="left:909px;top:47px" width="12" height="12" viewBox="0 0 12 12"><circle cx="6" cy="6" r="5" stroke="#e3e3e3" stroke-width="1.2" fill="none"/><path d="M6 5.2V9" stroke="#e3e3e3" stroke-width="1.3"/><circle cx="6" cy="3.4" r=".8" fill="#e3e3e3"/></svg><div class="a fx" id="f886f18d7" style="left:924.78px;top:47.07px;white-space:nowrap;transform-origin:0 0;transform:scaleX(1.0213);font-size:9.8px;line-height:11.27px;font-weight:bold;color:#e3e3e3">File</div><div class="a fx" id="f29fdc7ec" style="left:954.19px;top:46.34px;white-space:nowrap;transform-origin:0 0;transform:scaleX(1.0122);font-size:11.3px;line-height:12.99px;color:#e3e3e3">C:/Users/maxdu/OneDrive/CSCI%20102%20Final%20Website/index.html</div><svg class="a" style="left:1412px;top:46px" width="14" height="14" viewBox="0 0 14 14"><path d="M7 1.2l1.7 3.7 4 .4-3 2.7.9 4L7 10 3.4 12l.9-4-3-2.7 4-.4z" stroke="#e3e3e3" stroke-width="1.2" fill="none" stroke-linejoin="round"/></svg><svg class="a" style="left:1454px;top:45px" width="16" height="15" viewBox="0 0 16 15"><path d="M2 3.5h3.2V2.3a1.4 1.4 0 0 1 2.8 0V3.5h3.5v3.2h1a1.4 1.4 0 0 1 0 2.8h-1v3.8H2V9.8h1.2a1.4 1.4 0 0 0 0-2.8H2z" stroke="#e3e3e3" stroke-width="1.2" fill="none" stroke-linejoin="round"/></svg><div class="a" style="left:1484px;top:46px;width:1px;height:13px;background:#5f5f5f"></div><svg class="a" style="left:1499px;top:46px" width="16" height="14" viewBox="0 0 16 14"><path d="M6 12H1.5V2h13v3" stroke="#e3e3e3" stroke-width="1.2" fill="none"/><rect x="8" y="1.5" width="6.5" height="2" fill="#e3e3e3"/><circle cx="10" cy="9" r="2.5" stroke="#e3e3e3" stroke-width="1.2" fill="none"/><path d="M11.8 10.8L14 13" stroke="#e3e3e3" stroke-width="1.3"/></svg><div class="a" style="left:1529px;top:46px;width:1px;height:13px;background:#5f5f5f"></div><svg class="a" style="left:1543px;top:44px" width="18" height="18" viewBox="0 0 18 18"><defs><clipPath id="av"><circle cx="9" cy="9" r="8.5"/></clipPath></defs><circle cx="9" cy="9" r="8.5" fill="#9a9a9a"/><g clip-path="url(#av)"><path d="M2 18c1-3.5 3.5-4.5 7-4.5s6 1 7 4.5z" fill="#cfd8e0"/><ellipse cx="9" cy="9" rx="3.2" ry="4" fill="#c69478"/><path d="M5.8 7.5c0-2.6 1.4-3.6 3.2-3.6s3.2 1 3.2 3.6c-.8-1-1.8-1.3-3.2-1.3s-2.4.3-3.2 1.3z" fill="#3a2a20"/></g></svg><svg class="a" style="left:1579px;top:46px" width="5" height="14" viewBox="0 0 5 14"><circle cx="2.5" cy="2" r="1.4" fill="#e3e3e3"/><circle cx="2.5" cy="7" r="1.4" fill="#e3e3e3"/><circle cx="2.5" cy="12" r="1.4" fill="#e3e3e3"/></svg><div class="a" style="left:801px;top:72px;width:799px;height:788px;background:#fff"></div><div class="a" style="left:801px;top:72px;width:799px;height:72px;background:#87cefa"></div><div class="a fx" id="f6acee00b" style="left:861.55px;top:99.53px;white-space:nowrap;transform-origin:0 0;transform:scaleX(1.0626);font-size:17px;line-height:19.55px;color:#fff;-webkit-text-stroke:0.7px #fff">Home</div><div class="a fx" id="f4346373a" style="left:985.79px;top:99.53px;white-space:nowrap;transform-origin:0 0;transform:scaleX(1.0119);font-size:17px;line-height:19.55px;color:#fff;-webkit-text-stroke:0.7px #fff">Gallery</div><div class="a fx" id="f557da929" style="left:1115.17px;top:99.53px;white-space:nowrap;transform-origin:0 0;transform:scaleX(1.0377);font-size:17px;line-height:19.55px;color:#fff;-webkit-text-stroke:0.7px #fff">Shop</div><div class="a fx" id="ff9612c35" style="left:1232.67px;top:99.53px;white-space:nowrap;transform-origin:0 0;transform:scaleX(1.0359);font-size:17px;line-height:19.55px;color:#fff;-webkit-text-stroke:0.7px #fff">Contact</div><div class="a fx" id="f176be0de" style="left:1067.13px;top:159.85px;white-space:nowrap;transform-origin:0 0;transform:scaleX(1.0886);font-size:30px;line-height:34.50px;color:#000;-webkit-text-stroke:0.35px #000">Max&#39;s Laser Prints</div><div class="a" style="left:1068px;top:189.2px;width:266px;height:2px;background:#000"></div><div class="a fx" id="f2d3f96db" style="left:817.60px;top:212.8px;white-space:nowrap;transform-origin:0 0;transform:scaleX(1.1245);font-size:16.5px;line-height:18.97px;font-style:italic;color:#87cefa">These Laser Prints are hand crafted in Western Washington University&#39;s Makerspace, using a</div><div class="a fx" id="f2b9f3052" style="left:1039.07px;top:242.8px;white-space:nowrap;transform-origin:0 0;transform:scaleX(1.1625);font-size:16.5px;line-height:18.97px;font-style:italic;color:#87cefa">state-of-the-art Laser Printer machine!</div><div class="a fx" id="f80b8f808" style="left:1131.14px;top:282.47px;white-space:nowrap;transform-origin:0 0;transform:scaleX(1.0707);font-size:31.5px;line-height:36.22px;font-style:italic;color:#000;-webkit-text-stroke:0.6px #000">Expertise</div><div class="a" style="left:1132px;top:312.5px;width:139px;height:2px;background:#000"></div><svg class="a" style="left:814px;top:323px" width="230" height="129" viewBox="0 0 230 129"><defs><linearGradient id="wd1" x1="0" y1="0" x2="1" y2="1"><stop offset="0" stop-color="#e7c888"/><stop offset=".45" stop-color="#edd296"/><stop offset="1" stop-color="#e4c584"/></linearGradient>
<linearGradient id="bg1" x1="0" y1="0" x2="1" y2="1"><stop offset="0" stop-color="#303030"/><stop offset=".35" stop-color="#383838"/><stop offset=".65" stop-color="#2e2e2e"/><stop offset="1" stop-color="#353535"/></linearGradient></defs>
<rect width="230" height="129" fill="url(#bg1)"/><g stroke="#222326" fill="none" opacity=".45"><path d="M-4 109 q20 -25 45 -30 t40 -35" stroke-width="2.1"/><path d="M29 64 q20 -25 45 -30 t40 -35" stroke-width="1.7"/><path d="M136 102 q20 -25 45 -30 t40 -35" stroke-width="1.1"/><path d="M-32 108 q20 -25 45 -30 t40 -35" stroke-width="1.6"/><path d="M166 0 q20 -25 45 -30 t40 -35" stroke-width="1.7"/><path d="M155 30 q20 -25 45 -30 t40 -35" stroke-width="2.4"/><path d="M203 4 q20 -25 45 -30 t40 -35" stroke-width="1.0"/><path d="M106 121 q20 -25 45 -30 t40 -35" stroke-width="1.6"/><path d="M18 54 q20 -25 45 -30 t40 -35" stroke-width="1.0"/><path d="M20 56 q20 -25 45 -30 t40 -35" stroke-width="1.7"/><path d="M23 30 q20 -25 45 -30 t40 -35" stroke-width="1.3"/><path d="M84 37 q20 -25 45 -30 t40 -35" stroke-width="1.0"/><path d="M186 72 q20 -25 45 -30 t40 -35" stroke-width="2.0"/><path d="M10 128 q20 -25 45 -30 t40 -35" stroke-width="2.3"/></g>
<path d="M45 14 L194 15 L198 123 L39 123 Z" fill="#161616" opacity=".5"/>
<path d="M43 12 L191 13 L195 120 L37 120 Z" fill="url(#wd1)"/>
<rect x="79.2" y="19.3" width="75.4" height="92.3" stroke="#c48a45" stroke-width="1" fill="none"/>
<rect x="82.7" y="22.3" width="68.3" height="85.7" stroke="#c48a45" stroke-width=".8" fill="none"/>
<text x="117" y="31.3" font-size="5" font-family="Liberation Sans" font-weight="bold" fill="#c48a45" text-anchor="middle">THE</text>
<path id="arc1" d="M86 46.5 Q116.5 37 147 46.5" fill="none"/>
<text font-size="10" font-family="Liberation Sans" font-weight="bold" fill="#c48a45"><textPath href="#arc1" startOffset="50%" text-anchor="middle" textLength="60" lengthAdjust="spacingAndGlyphs">CASCADE</textPath></text>
<text x="117.5" y="52.3" font-size="8.2" font-family="Liberation Sans" font-weight="bold" fill="#c48a45" text-anchor="middle" textLength="33" lengthAdjust="spacingAndGlyphs">LOOP</text>
<path d="M87 90 L87 73 L92.5 65.6 L98 70 L101 64 L104 66 L108 61 L114.8 56.5 L125 66 L131 68 L137 64.2 L145.5 72 L145.5 90 Z" fill="#c48a45"/>
<path d="M114.8 56.5 L121 62 L117 64 L119 70 L112 60 Z M137 64.2 L142 69 L139 71 Z M92.5 65.6 L96 69 L93 73 Z" fill="#edd296"/>
<path d="M103 71 C107 75 112 78 120 80 L138 90 L102 90 C112 84 110 79 100 74 Z" fill="#edd296"/>
<path d="M87 82.5 L104 81.5 M124 81.5 L145.5 82.5" stroke="#edd296" stroke-width="1.2"/>
<text x="116.5" y="97.6" font-size="5" font-family="Liberation Sans" fill="#c48a45" text-anchor="middle" textLength="44" lengthAdjust="spacingAndGlyphs">WASHINGTON'S</text>
<text x="116" y="103.8" font-size="5" font-family="Liberation Sans" fill="#c48a45" text-anchor="middle" textLength="60" lengthAdjust="spacingAndGlyphs">ULTIMATE ROAD TRIP</text>
</svg><svg class="a" style="left:1086px;top:323px" width="230" height="129" viewBox="0 0 230 129"><defs><linearGradient id="wd2" x1="0" y1="0" x2="1" y2="1"><stop offset="0" stop-color="#e7c888"/><stop offset=".45" stop-color="#edd296"/><stop offset="1" stop-color="#e4c584"/></linearGradient>
<linearGradient id="bg2" x1="0" y1="0" x2="1" y2="1"><stop offset="0" stop-color="#303030"/><stop offset=".35" stop-color="#383838"/><stop offset=".65" stop-color="#2e2e2e"/><stop offset="1" stop-color="#353535"/></linearGradient></defs>
<clipPath id="fr2"><rect x="73" y="17.1" width="85" height="86.3"/></clipPath>
<rect width="230" height="129" fill="url(#bg2)"/><g stroke="#222326" fill="none" opacity=".45"><path d="M218 122 q20 -25 45 -30 t40 -35" stroke-width="1.1"/><path d="M-17 108 q20 -25 45 -30 t40 -35" stroke-width="2.1"/><path d="M141 40 q20 -25 45 -30 t40 -35" stroke-width="1.9"/><path d="M124 75 q20 -25 45 -30 t40 -35" stroke-width="1.2"/><path d="M76 51 q20 -25 45 -30 t40 -35" stroke-width="2.1"/><path d="M229 122 q20 -25 45 -30 t40 -35" stroke-width="1.8"/><path d="M80 35 q20 -25 45 -30 t40 -35" stroke-width="1.1"/><path d="M-33 60 q20 -25 45 -30 t40 -35" stroke-width="1.5"/><path d="M63 115 q20 -25 45 -30 t40 -35" stroke-width="1.8"/><path d="M111 30 q20 -25 45 -30 t40 -35" stroke-width="1.0"/><path d="M48 18 q20 -25 45 -30 t40 -35" stroke-width="1.8"/><path d="M230 87 q20 -25 45 -30 t40 -35" stroke-width="1.3"/><path d="M201 103 q20 -25 45 -30 t40 -35" stroke-width="2.1"/><path d="M205 98 q20 -25 45 -30 t40 -35" stroke-width="2.2"/></g>
<path d="M37 8 L201 10 L200 129 L37 129 Z" fill="#161616" opacity=".5"/>
<path d="M34 4.4 L197.6 6.2 L197 125.6 L34 126.5 Z" fill="url(#wd2)"/>
<g clip-path="url(#fr2)">
<path d="M78 21.5 H94 M102 23 H130 M86 26 H116 M136 24.5 H152" stroke="#c48a45" stroke-width="1" opacity=".85"/>
<path d="M73 28.5 C90 27 110 30.5 125 28.5 C135 27.5 150 28 158 29 V35.7 C140 34 110 36.5 73 35.7 Z" fill="#c48a45"/>
<path d="M73 36 C82 38 90 41 97 46 C90 52 82 60 73 70 Z" fill="#c48a45" opacity=".85"/>
<path d="M158 31 C150 35 138 40 128 46 C138 52 148 62 158 74 Z" fill="#c48a45" opacity=".85"/>
<path d="M76 45 L86 47 M75 52 L84 53 M75 58 L80 59 M150 40 L140 44 M153 50 L142 52 M155 60 L147 60" stroke="#edd296" stroke-width=".7" opacity=".7"/>
<path d="M96 46 H128 M88 52 Q111 48 134 52" stroke="#c48a45" stroke-width=".8" fill="none"/>
<ellipse cx="111.3" cy="62" rx="27" ry="11.5" stroke="#c48a45" stroke-width=".9" fill="none"/>
<ellipse cx="111.3" cy="62" rx="17" ry="7" stroke="#c48a45" stroke-width=".9" fill="none"/>
<ellipse cx="111.3" cy="61" rx="7.5" ry="5.2" fill="#c48a45"/>
<path d="M73.5 70.5 L70.2 88.4 L69.3 103 L77.7 103 L76.8 88.4 Z" fill="#c48a45"/><path d="M76.6 69.8 L73.3 88.0 L72.4 103 L80.8 103 L79.9 88.0 Z" fill="#c48a45"/><path d="M80.1 76.2 L76.8 90.9 L75.9 103 L84.3 103 L83.4 90.9 Z" fill="#c48a45"/><path d="M81.7 67.0 L78.4 86.8 L77.5 103 L85.9 103 L85.0 86.8 Z" fill="#c48a45"/><path d="M85.1 74.2 L81.8 90.0 L80.9 103 L89.3 103 L88.4 90.0 Z" fill="#c48a45"/><path d="M89.5 83.4 L86.2 94.2 L85.3 103 L93.7 103 L92.8 94.2 Z" fill="#c48a45"/><path d="M92.1 83.3 L88.8 94.1 L87.9 103 L96.3 103 L95.4 94.1 Z" fill="#c48a45"/><path d="M94.6 87.2 L91.3 95.9 L90.4 103 L98.8 103 L97.9 95.9 Z" fill="#c48a45"/><path d="M97.5 78.6 L94.2 92.0 L93.3 103 L101.7 103 L100.8 92.0 Z" fill="#c48a45"/><path d="M100.1 80.1 L96.8 92.7 L95.9 103 L104.3 103 L103.4 92.7 Z" fill="#c48a45"/><path d="M103.3 88.2 L100.0 96.4 L99.1 103 L107.5 103 L106.6 96.4 Z" fill="#c48a45"/><path d="M106.4 81.9 L103.1 93.5 L102.2 103 L110.6 103 L109.7 93.5 Z" fill="#c48a45"/><path d="M108.4 88.6 L105.1 96.5 L104.2 103 L112.6 103 L111.7 96.5 Z" fill="#c48a45"/><path d="M112.4 83.3 L109.1 94.1 L108.2 103 L116.6 103 L115.7 94.1 Z" fill="#c48a45"/><path d="M115.0 78.5 L111.7 92.0 L110.8 103 L119.2 103 L118.3 92.0 Z" fill="#c48a45"/><path d="M117.9 77.9 L114.6 91.7 L113.7 103 L122.1 103 L121.2 91.7 Z" fill="#c48a45"/><path d="M120.2 79.4 L116.9 92.4 L116.0 103 L124.4 103 L123.5 92.4 Z" fill="#c48a45"/><path d="M123.2 77.8 L119.9 91.6 L119.0 103 L127.4 103 L126.5 91.6 Z" fill="#c48a45"/><path d="M127.0 87.8 L123.7 96.2 L122.8 103 L131.2 103 L130.3 96.2 Z" fill="#c48a45"/><path d="M128.4 86.4 L125.1 95.5 L124.2 103 L132.6 103 L131.7 95.5 Z" fill="#c48a45"/><path d="M132.9 83.8 L129.6 94.3 L128.7 103 L137.1 103 L136.2 94.3 Z" fill="#c48a45"/><path d="M135.2 85.4 L131.9 95.1 L131.0 103 L139.4 103 L138.5 95.1 Z" fill="#c48a45"/><path d="M137.8 84.4 L134.5 94.6 L133.6 103 L142.0 103 L141.1 94.6 Z" fill="#c48a45"/><path d="M140.4 82.0 L137.1 93.5 L136.2 103 L144.6 103 L143.7 93.5 Z" fill="#c48a45"/><path d="M143.8 78.1 L140.5 91.8 L139.6 103 L148.0 103 L147.1 91.8 Z" fill="#c48a45"/><path d="M146.9 65.9 L143.6 86.3 L142.7 103 L151.1 103 L150.2 86.3 Z" fill="#c48a45"/><path d="M150.1 65.1 L146.8 85.9 L145.9 103 L154.3 103 L153.4 85.9 Z" fill="#c48a45"/><path d="M152.6 75.0 L149.3 90.4 L148.4 103 L156.8 103 L155.9 90.4 Z" fill="#c48a45"/><path d="M155.9 65.4 L152.6 86.1 L151.7 103 L160.1 103 L159.2 86.1 Z" fill="#c48a45"/><path d="M158.9 70.2 L155.6 88.2 L154.7 103 L163.1 103 L162.2 88.2 Z" fill="#c48a45"/>
<rect x="73" y="90" width="85" height="14" fill="#c48a45"/><path d="M76.0 92 L77.5 103" stroke="#edd296" stroke-width=".8" opacity=".55"/><path d="M80.3 94 L81.8 103" stroke="#edd296" stroke-width=".8" opacity=".55"/><path d="M84.6 96 L86.1 103" stroke="#edd296" stroke-width=".8" opacity=".55"/><path d="M88.9 92 L90.4 103" stroke="#edd296" stroke-width=".8" opacity=".55"/><path d="M93.2 94 L94.7 103" stroke="#edd296" stroke-width=".8" opacity=".55"/><path d="M97.5 96 L99.0 103" stroke="#edd296" stroke-width=".8" opacity=".55"/><path d="M101.8 92 L103.3 103" stroke="#edd296" stroke-width=".8" opacity=".55"/><path d="M106.1 94 L107.6 103" stroke="#edd296" stroke-width=".8" opacity=".55"/><path d="M110.4 96 L111.9 103" stroke="#edd296" stroke-width=".8" opacity=".55"/><path d="M114.7 92 L116.2 103" stroke="#edd296" stroke-width=".8" opacity=".55"/><path d="M119.0 94 L120.5 103" stroke="#edd296" stroke-width=".8" opacity=".55"/><path d="M123.3 96 L124.8 103" stroke="#edd296" stroke-width=".8" opacity=".55"/><path d="M127.6 92 L129.1 103" stroke="#edd296" stroke-width=".8" opacity=".55"/><path d="M131.9 94 L133.4 103" stroke="#edd296" stroke-width=".8" opacity=".55"/><path d="M136.2 96 L137.7 103" stroke="#edd296" stroke-width=".8" opacity=".55"/><path d="M140.5 92 L142.0 103" stroke="#edd296" stroke-width=".8" opacity=".55"/><path d="M144.8 94 L146.3 103" stroke="#edd296" stroke-width=".8" opacity=".55"/><path d="M149.1 96 L150.6 103" stroke="#edd296" stroke-width=".8" opacity=".55"/><path d="M153.4 92 L154.9 103" stroke="#edd296" stroke-width=".8" opacity=".55"/>
</g>
<rect x="73" y="17.1" width="85" height="86.3" stroke="#c48a45" stroke-width="2" fill="none"/>
<text x="114.5" y="117" font-size="10.5" font-family="Liberation Sans" font-weight="bold" fill="#c48a45" text-anchor="middle" textLength="157" lengthAdjust="spacingAndGlyphs">EMERALD BAY, LAKE TAHOE</text>
</svg><svg class="a" style="left:1357px;top:323px" width="230" height="129" viewBox="0 0 230 129"><defs><linearGradient id="wd3" x1="0" y1="0" x2="1" y2="1"><stop offset="0" stop-color="#e7c888"/><stop offset=".45" stop-color="#edd296"/><stop offset="1" stop-color="#e4c584"/></linearGradient>
<linearGradient id="bg3" x1="0" y1="0" x2="1" y2="1"><stop offset="0" stop-color="#303030"/><stop offset=".35" stop-color="#383838"/><stop offset=".65" stop-color="#2e2e2e"/><stop offset="1" stop-color="#353535"/></linearGradient></defs>
<rect width="230" height="129" fill="url(#bg3)"/><g stroke="#222326" fill="none" opacity=".45"><path d="M24 70 q20 -25 45 -30 t40 -35" stroke-width="1.6"/><path d="M123 81 q20 -25 45 -30 t40 -35" stroke-width="1.1"/><path d="M-36 108 q20 -25 45 -30 t40 -35" stroke-width="1.4"/><path d="M23 128 q20 -25 45 -30 t40 -35" stroke-width="1.7"/><path d="M186 61 q20 -25 45 -30 t40 -35" stroke-width="2.0"/><path d="M1 82 q20 -25 45 -30 t40 -35" stroke-width="2.3"/><path d="M101 96 q20 -25 45 -30 t40 -35" stroke-width="2.0"/><path d="M-23 98 q20 -25 45 -30 t40 -35" stroke-width="1.9"/><path d="M41 4 q20 -25 45 -30 t40 -35" stroke-width="2.3"/><path d="M88 93 q20 -25 45 -30 t40 -35" stroke-width="2.3"/><path d="M153 119 q20 -25 45 -30 t40 -35" stroke-width="1.6"/><path d="M176 57 q20 -25 45 -30 t40 -35" stroke-width="2.4"/><path d="M197 13 q20 -25 45 -30 t40 -35" stroke-width="1.2"/><path d="M19 125 q20 -25 45 -30 t40 -35" stroke-width="1.7"/></g>
<path d="M32 4 L206 4 L207 129 L30 129 Z" fill="#161616" opacity=".5"/>
<path d="M29 1.8 L202.4 1.8 L203 126.5 L27.5 126.5 Z" fill="url(#wd3)"/>
<g stroke="#c48a45" stroke-width="1.05" fill="none" stroke-linejoin="round">
<path d="M109.5 6 V15"/>
<path d="M106 15 H113 L112 17 H107 Z M98 19.5 C100 17.5 119 17.5 121 19.5 L117 23.5 H102 Z"/>
<path d="M103.5 23.5 L107.5 60 L105 98.5 M115.5 23.5 L111.5 60 L114 98.5 M106.5 50 H112.5 M106.5 70 H112.5"/>
<path d="M63 78 V47 C63 41 71 40 72 45 V50"/>
<path d="M72 50 H77 V47 H90 V53 H95 V70"/>
<path d="M77 53 V67 H86 V60 H102"/>
<path d="M84 67 V85 H92 M92 75 H104"/>
<path d="M63 78 L66 73 L68 77 L71 72 L74 80 L77 78 L80 86 L78 90 L82 92 L79 98 L88 99 L92 92 L94 97 L96 85"/>
<path d="M123 64 V36 H135 V49 M117 47 L123 44"/>
<path d="M133 39 L143 28 L151 25 L157 28 L168 38 L161 37 L156 33 L152 35 L147 32 L141 38 Z"/>
<path d="M135 64 H145 V53 H157 V62 H163.5 V84.6"/>
<path d="M145 64 V75 H148.6 V96 H167 V75 H160"/>
<path d="M120 99 L123 88 L126 94 L130 82 L133 99 M134 92 L137 84 L141 96 L145 90 L148.6 96"/>
<path d="M118 64 H130 V99 M130 75 H145"/>
</g>
<g fill="#c48a45"><rect x="66" y="50" width="2.5" height="1.8"/><rect x="81" y="51" width="3" height="1.8"/><rect x="126" y="40" width="3.5" height="1.8"/><rect x="150" y="57" width="3" height="1.8"/><rect x="88" y="71" width="3" height="1.8"/><rect x="121" y="69" width="3" height="1.8"/><rect x="135" y="68" width="3" height="1.8"/><rect x="152" y="86" width="4" height="1.8"/><rect x="152" y="66" width="3" height="1.8"/><rect x="80" y="79" width="3" height="1.8"/><rect x="124" y="55" width="3" height="1.8"/></g>
<text x="114" y="116" font-size="10" font-family="Liberation Sans" font-weight="bold" fill="#c48a45" text-anchor="middle" textLength="162" lengthAdjust="spacingAndGlyphs">SEATTLE, WASHINGTON</text>
</svg><div class="a fx" id="f3f32b7a5" style="left:840.43px;top:484.41px;white-space:nowrap;transform-origin:0 0;transform:scaleX(1.0922);font-size:18px;line-height:20.70px;font-style:italic;color:#000;-webkit-text-stroke:0.45px #000">Custom Laser Prints</div><div class="a fx" id="f90b8a289" style="left:1137.14px;top:484.41px;white-space:nowrap;transform-origin:0 0;transform:scaleX(1.0800);font-size:18px;line-height:20.70px;font-style:italic;color:#000;-webkit-text-stroke:0.45px #000">Nature Scenes</div><div class="a fx" id="f9d57ae80" style="left:1421.65px;top:484.41px;white-space:nowrap;transform-origin:0 0;transform:scaleX(1.0682);font-size:18px;line-height:20.70px;font-style:italic;color:#000;-webkit-text-stroke:0.45px #000">City Scapes</div><div class="a fx" id="f859f5483" style="left:830.32px;top:532.81px;white-space:nowrap;transform-origin:0 0;transform:scaleX(1.0989);font-size:15.4px;line-height:17.71px;color:#232323">If you are interested in our</div><div class="a fx" id="f4b3f1017" style="left:826.63px;top:562.81px;white-space:nowrap;transform-origin:0 0;transform:scaleX(1.0813);font-size:15.4px;line-height:17.71px;color:#232323">Custom Laser Print service,</div><div class="a fx" id="f2b591cda" style="left:804.09px;top:592.81px;white-space:nowrap;transform-origin:0 0;transform:scaleX(1.1395);font-size:15.4px;line-height:17.71px;color:#232323">contact us by clicking the button</div><div class="a fx" id="fd72b7cea" style="left:897.52px;top:622.31px;white-space:nowrap;transform-origin:0 0;transform:scaleX(1.0957);font-size:15.4px;line-height:17.71px;color:#232323">below! <svg width="7" height="8" viewBox="0 0 7 8" style="vertical-align:0px;margin-left:1px"><path d="M3.5 0.5V7.2M0.8 4.6L3.5 7.3L6.2 4.6" stroke="#232323" stroke-width="1.1" fill="none"/></svg></div><div class="a fx" id="fa7361bb4" style="left:1074.53px;top:532.81px;white-space:nowrap;transform-origin:0 0;transform:scaleX(1.0877);font-size:15.4px;line-height:17.71px;color:#232323">Like what you see? Check out our</div><div class="a fx" id="f5ec8dd01" style="left:1074.13px;top:562.81px;white-space:nowrap;transform-origin:0 0;transform:scaleX(1.0896);font-size:15.4px;line-height:17.71px;color:#232323"><span style="text-decoration:underline;text-underline-offset:2px;color:#3535d8">Gallery</span> for others like this or Shop</div><div class="a fx" id="f58648b1a" style="left:1090.09px;top:592.81px;white-space:nowrap;transform-origin:0 0;transform:scaleX(1.1359);font-size:15.4px;line-height:17.71px;color:#232323">Nature by clicking the button</div><div class="a fx" id="fd72b7cea" style="left:1169.12px;top:622.31px;white-space:nowrap;transform-origin:0 0;transform:scaleX(1.0957);font-size:15.4px;line-height:17.71px;color:#232323">below! <svg width="7" height="8" viewBox="0 0 7 8" style="vertical-align:0px;margin-left:1px"><path d="M3.5 0.5V7.2M0.8 4.6L3.5 7.3L6.2 4.6" stroke="#232323" stroke-width="1.1" fill="none"/></svg></div><div class="a fx" id="fa7361bb4" style="left:1346.03px;top:532.81px;white-space:nowrap;transform-origin:0 0;transform:scaleX(1.0899);font-size:15.4px;line-height:17.71px;color:#232323">Like what you see? Check out our</div><div class="a fx" id="f5ec8dd01" style="left:1345.63px;top:562.81px;white-space:nowrap;transform-origin:0 0;transform:scaleX(1.0918);font-size:15.4px;line-height:17.71px;color:#232323"><span style="text-decoration:underline;text-underline-offset:2px;color:#3535d8">Gallery</span> for others like this or Shop</div><div class="a fx" id="f943ed4ca" style="left:1346.10px;top:592.81px;white-space:nowrap;transform-origin:0 0;transform:scaleX(1.1291);font-size:15.4px;line-height:17.71px;color:#232323">City by clicking the button below!</div><svg class="a" style="left:1469px;top:629px" width="7" height="8" viewBox="0 0 7 8"><path d="M3.5 0.5V7.2M0.8 4.6L3.5 7.3L6.2 4.6" stroke="#232323" stroke-width="1.1" fill="none"/></svg><div class="a" style="left:801px;top:692px;width:799px;height:4px;background:#000"></div><div class="a" style="left:801px;top:696px;width:799px;height:154px;background:#add8e6"></div><div class="a" style="left:885px;top:654px;width:88px;height:46px;background:#87cefa;border-radius:4px"></div><div class="a fx" id="fc6b21772" style="left:898.60px;top:668.22px;white-space:nowrap;transform-origin:0 0;transform:scaleX(1.1250);font-size:15.5px;line-height:17.82px;color:#fff">Contact</div><div class="a" style="left:1139px;top:654px;width:123px;height:46px;background:#87cefa;border-radius:4px"></div><div class="a fx" id="feef7b444" style="left:1152.87px;top:668.22px;white-space:nowrap;transform-origin:0 0;transform:scaleX(1.1013);font-size:15.5px;line-height:17.82px;color:#fff">Shop Nature</div><div class="a" style="left:1422px;top:654px;width:100px;height:46px;background:#87cefa;border-radius:4px"></div><div class="a fx" id="f8249e860" style="left:1435.62px;top:668.22px;white-space:nowrap;transform-origin:0 0;transform:scaleX(1.0952);font-size:15.5px;line-height:17.82px;color:#fff">Shop City</div><div class="a fx" id="fc9df8095" style="left:1067.92px;top:733.81px;white-space:nowrap;transform-origin:0 0;transform:scaleX(1.0990);font-size:15.4px;line-height:17.71px;color:#fff">Copyright &copy; 2025 Max Duenhoelter</div><svg class="a" style="left:1165px;top:776px" width="26" height="26" viewBox="0 0 26 26"><circle cx="13" cy="13" r="12.5" fill="#000"/><rect x="7" y="7" width="12" height="12" rx="3.5" stroke="#fff" stroke-width="1.6" fill="none"/><circle cx="13" cy="13" r="2.9" stroke="#fff" stroke-width="1.6" fill="none"/><circle cx="16.6" cy="9.4" r=".8" fill="#fff"/></svg><div class="a" style="left:1198px;top:793px;width:5px;height:1px;background:#2a2aee"></div><svg class="a" style="left:1210px;top:776px" width="26" height="26" viewBox="0 0 26 26"><circle cx="13" cy="13" r="12.5" fill="#000"/><rect x="7.3" y="10.5" width="2.6" height="8" fill="#fff"/><circle cx="8.6" cy="7.8" r="1.5" fill="#fff"/><path d="M11.6 10.5h2.5v1.2c.5-.9 1.5-1.4 2.7-1.4 2 0 3 1.2 3 3.5v4.7h-2.6v-4.3c0-1.1-.4-1.7-1.3-1.7-1 0-1.7.7-1.7 1.9v4.1h-2.6z" fill="#fff"/></svg><div class="a fx" id="f0e042fdd" style="left:1130.20px;top:809.12px;white-space:nowrap;transform-origin:0 0;transform:scaleX(0.9966);font-size:15.5px;line-height:17.82px;color:#fff">03/11/2025 20:57:48</div><div class="a" style="left:1494px;top:810px;width:89px;height:33px;background:#87cefa;border-radius:4px"></div><div class="a fx" id="f9fc6c32f" style="left:1507.97px;top:819.32px;white-space:nowrap;transform-origin:0 0;transform:scaleX(0.9187);font-size:13px;line-height:14.95px;color:#fff">Back to Top</div><div class="a" style="left:801px;top:72px;width:40px;height:788px;background:linear-gradient(to right,rgba(0,0,0,.16),rgba(0,0,0,.07) 20%,rgba(0,0,0,.025) 50%,rgba(0,0,0,0))"></div></body></html>
